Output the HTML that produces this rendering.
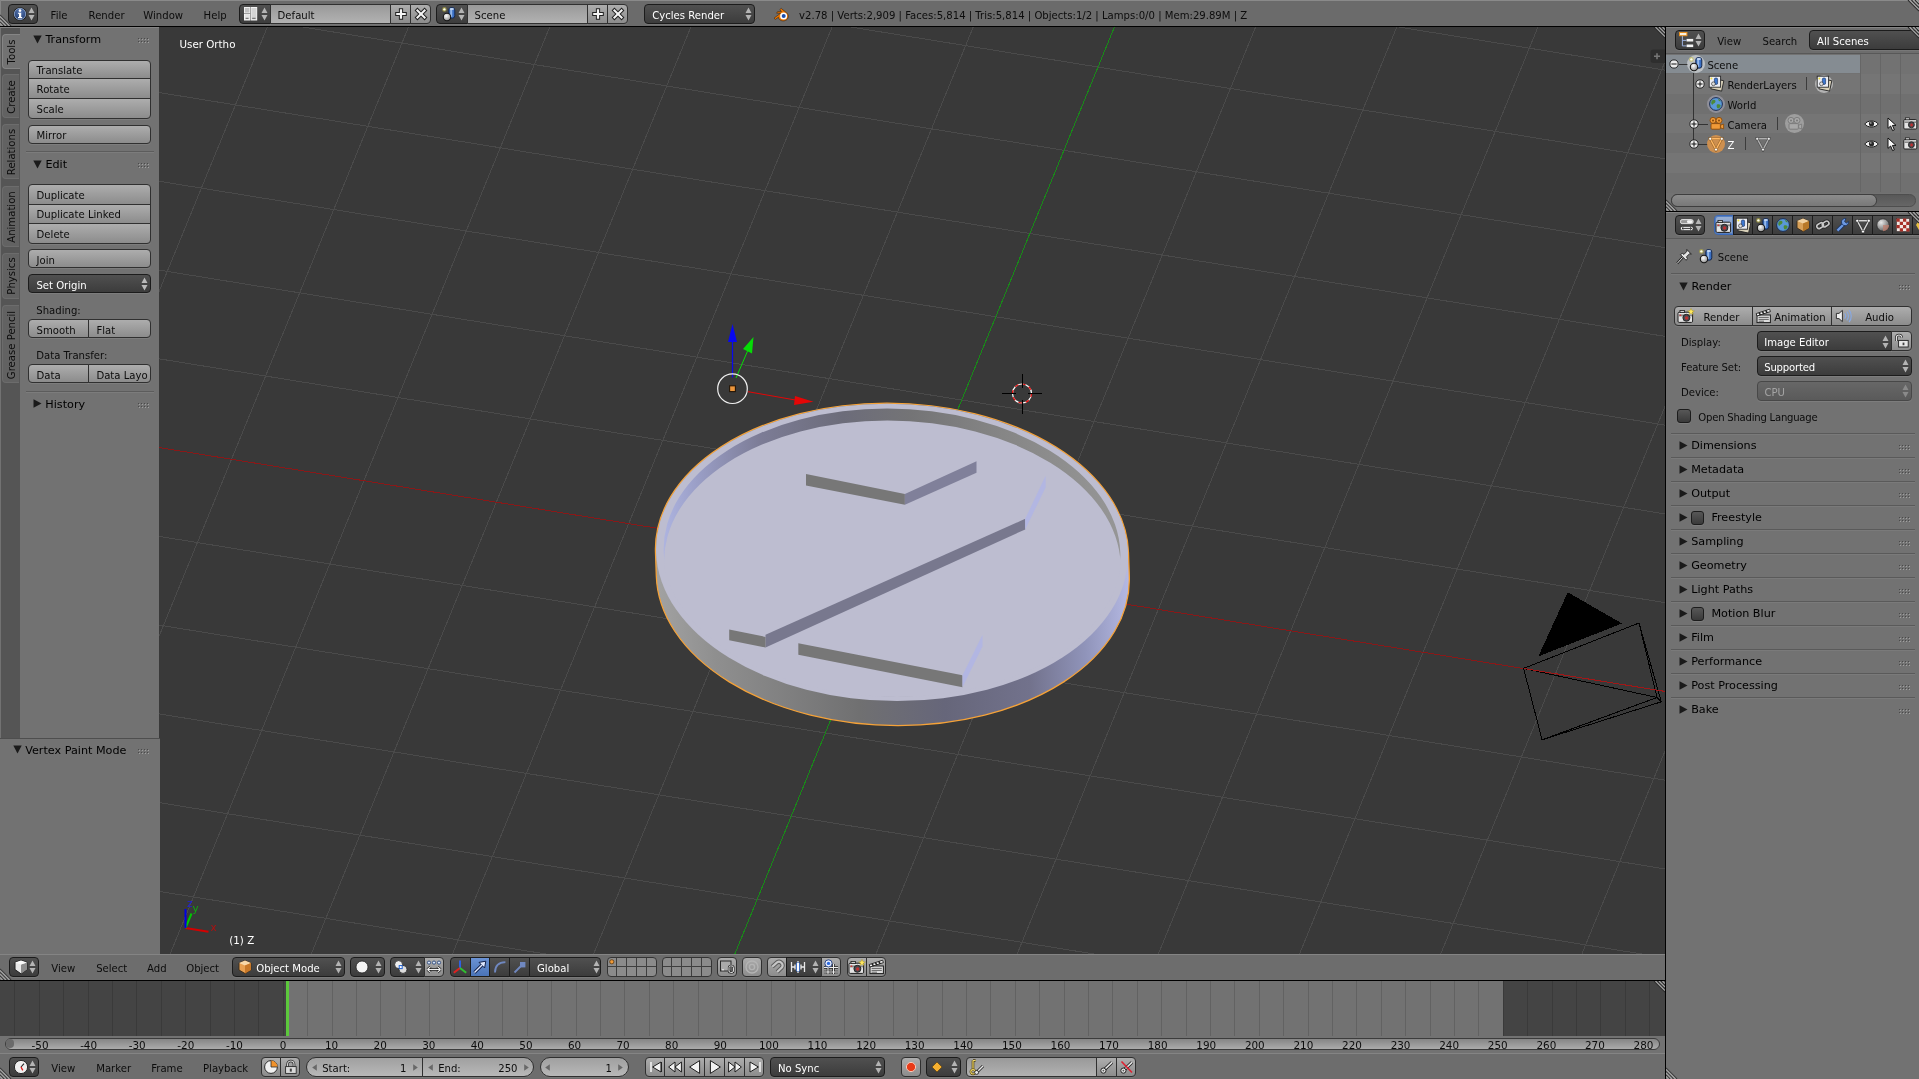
<!DOCTYPE html>
<html><head><meta charset="utf-8"><title>Blender</title><style>
html,body{margin:0;padding:0;overflow:hidden;background:#727272}
body{width:1919px;height:1079px;position:relative;font-family:"DejaVu Sans","Liberation Sans",sans-serif;font-size:10.1px;color:#000;line-height:1}
div,span,svg{position:absolute;box-sizing:border-box;white-space:nowrap}
.hdr{background:#6b6b6b}
.pan{background:#727272}
.t{font-size:10.1px;color:#0c0c0c;line-height:12px;height:12px}
.tw{color:#fff}
.pt{font-size:11.2px;color:#000;line-height:13px;height:13px}
.btn{border:1px solid #303030;border-radius:4px;background:linear-gradient(#adadad,#8c8c8c);box-shadow:0 1px 0 rgba(255,255,255,.08)}
.txt{border:1px solid #303030;border-radius:4px;background:linear-gradient(#999,#b2b2b2);box-shadow:0 1px 0 rgba(255,255,255,.08)}
.mnu{border:1px solid #1c1c1c;border-radius:4px;background:linear-gradient(#505050,#3c3c3c);box-shadow:0 1px 0 rgba(255,255,255,.08)}
.num{border:1px solid #303030;border-radius:10px;background:linear-gradient(#a0a0a0,#b8b8b8);box-shadow:0 1px 0 rgba(255,255,255,.08)}
.rl{border-radius:4px 0 0 4px}.rr{border-radius:0 4px 4px 0}.rn{border-radius:0}
.rt{border-radius:4px 4px 0 0}.rb{border-radius:0 0 4px 4px}
.nbl{border-left:none}.nbt{border-top:none}
.chk{border:1px solid #1c1c1c;border-radius:3px;background:linear-gradient(#575757,#3a3a3a);box-shadow:0 1px 0 rgba(255,255,255,.08)}
.sep{background:#5a5a5a;height:1px}
</style></head><body><div id="root" style="left:0;top:0;width:1919px;height:1079px;will-change:transform">
<div class="hdr" style="left:0px;top:0px;width:1919px;height:26px;"></div>
<div class="" style="left:0px;top:0px;width:1919px;height:1px;background:#8a8a8a"></div>
<div class="" style="left:0px;top:0px;width:1px;height:26px;background:#858585"></div>
<div class="" style="left:0px;top:26px;width:1919px;height:1px;background:#000"></div>
<div class="" style="left:0px;top:27px;width:1665px;height:1px;background:#858585"></div>
<div class="pan" style="left:0px;top:28px;width:160px;height:926px;"></div>
<div class="" style="left:159px;top:27px;width:1506px;height:927px;background:#393939"></div>
<svg style="left:159px;top:27px" width="1506" height="927" viewBox="159 27 1506 927"><defs><linearGradient id="gside" x1="655" x2="1130" y1="0" y2="0" gradientUnits="userSpaceOnUse"><stop offset="0" stop-color="#a2a2a2"/><stop offset="0.12" stop-color="#8f8f8f"/><stop offset="0.42" stop-color="#707071"/><stop offset="0.6" stop-color="#66667a"/><stop offset="0.78" stop-color="#72728c"/><stop offset="0.9" stop-color="#9094ba"/><stop offset="1" stop-color="#b6bae4"/></linearGradient><linearGradient id="gwall" x1="664" x2="1122" y1="0" y2="0" gradientUnits="userSpaceOnUse"><stop offset="0" stop-color="#aeb4e0"/><stop offset="0.08" stop-color="#9a9ec6"/><stop offset="0.22" stop-color="#7c7c96"/><stop offset="0.4" stop-color="#6c6c7a"/><stop offset="0.55" stop-color="#747476"/><stop offset="0.75" stop-color="#868686"/><stop offset="1" stop-color="#969696"/></linearGradient><clipPath id="cin"><ellipse cx="892.4" cy="552.4" rx="229.2" ry="144.7"/></clipPath></defs><g stroke="#4a4a4a" stroke-width="1" shape-rendering="crispEdges" fill="none"><line x1="8.7" y1="-375.6" x2="-604.9" y2="1122.7"/><line x1="141.1" y1="-354.2" x2="-472.5" y2="1144.1"/><line x1="273.5" y1="-332.7" x2="-340.1" y2="1165.6"/><line x1="405.9" y1="-311.3" x2="-207.7" y2="1187.0"/><line x1="538.3" y1="-289.9" x2="-75.3" y2="1208.5"/><line x1="670.7" y1="-268.4" x2="57.1" y2="1229.9"/><line x1="803.1" y1="-247.0" x2="189.5" y2="1251.3"/><line x1="935.5" y1="-225.5" x2="321.9" y2="1272.8"/><line x1="1067.9" y1="-204.1" x2="454.3" y2="1294.2"/><line x1="1332.7" y1="-161.2" x2="719.1" y2="1337.1"/><line x1="1465.1" y1="-139.8" x2="851.5" y2="1358.5"/><line x1="1597.5" y1="-118.3" x2="983.9" y2="1380.0"/><line x1="1729.9" y1="-96.9" x2="1116.3" y2="1401.4"/><line x1="1862.3" y1="-75.5" x2="1248.7" y2="1422.9"/><line x1="1994.7" y1="-54.0" x2="1381.1" y2="1444.3"/><line x1="2127.1" y1="-32.6" x2="1513.5" y2="1465.7"/><line x1="2259.5" y1="-11.1" x2="1645.9" y2="1487.2"/><line x1="2391.9" y1="10.3" x2="1778.3" y2="1508.6"/><line x1="8.7" y1="-375.6" x2="2391.9" y2="10.3"/><line x1="-25.4" y1="-292.4" x2="2357.8" y2="93.5"/><line x1="-59.5" y1="-209.1" x2="2323.7" y2="176.8"/><line x1="-93.6" y1="-125.9" x2="2289.6" y2="260.0"/><line x1="-127.7" y1="-42.7" x2="2255.6" y2="343.3"/><line x1="-161.7" y1="40.6" x2="2221.5" y2="426.5"/><line x1="-195.8" y1="123.8" x2="2187.4" y2="509.7"/><line x1="-229.9" y1="207.1" x2="2153.3" y2="593.0"/><line x1="-264.0" y1="290.3" x2="2119.2" y2="676.2"/><line x1="-332.2" y1="456.8" x2="2051.0" y2="842.7"/><line x1="-366.3" y1="540.0" x2="2016.9" y2="925.9"/><line x1="-400.4" y1="623.3" x2="1982.8" y2="1009.2"/><line x1="-434.5" y1="706.5" x2="1948.7" y2="1092.4"/><line x1="-468.6" y1="789.7" x2="1914.7" y2="1175.7"/><line x1="-502.6" y1="873.0" x2="1880.6" y2="1258.9"/><line x1="-536.7" y1="956.2" x2="1846.5" y2="1342.1"/><line x1="-570.8" y1="1039.5" x2="1812.4" y2="1425.4"/><line x1="-604.9" y1="1122.7" x2="1778.3" y2="1508.6"/><line stroke="#8a1818" x1="-298.1" y1="373.5" x2="2085.1" y2="759.5"/><line stroke="#188a18" x1="1200.3" y1="-182.7" x2="586.7" y2="1315.7"/></g><g stroke="#000" stroke-width="1" fill="none" shape-rendering="crispEdges"><polygon points="1568,593 1620.9,623.4 1539.3,655.5" fill="#000"/><polygon points="1523.6,668.4 1639,623 1661.3,701.8 1542.1,739.8"/><path d="M1523.6 668.4L1657 697.5M1639 623L1657 697.5M1661.3 701.8L1657 697.5M1542.1 739.8L1657 697.5"/></g><line stroke="#a01818" stroke-width="1" shape-rendering="crispEdges" x1="1523.6" y1="668.5" x2="1665" y2="691.4"/><g transform="matrix(1 0 0.0345 1 -19.468 0)"><path d="M655.9 552.4 A236.5 149.3 0 0 1 1128.9 552.4 L1128.9 576.3 A236.5 149.3 0 0 1 655.9 576.3 Z" fill="url(#gside)" stroke="#f5a238" stroke-width="1.3"/><ellipse cx="892.4" cy="552.4" rx="235.9" ry="148.7" fill="#bdbdd0"/><ellipse cx="892.4" cy="552.4" rx="228.3" ry="143.8" fill="url(#gwall)"/><g clip-path="url(#cin)"><ellipse cx="892.4" cy="564.4" rx="228.3" ry="143.8" fill="#bdbdd0"/></g></g><polygon points="806.0,474.0 904.9,494.0 904.9,504.7 806.0,485.5" fill="#777777"/><polygon points="904.9,494.0 976.5,461.2 976.5,472.7 904.9,504.7" fill="#80809a"/><polygon points="765.5,634.8 1025.2,518.8 1025.2,529.4 765.5,647.5" fill="#78788e"/><polygon points="729.2,629.6 765.5,636.9 765.5,647.5 729.2,640.3" fill="#777777"/><polygon points="1025.2,518.8 1045.6,475.7 1045.6,487.6 1025.2,529.4" fill="#b2b6e2"/><polygon points="798.3,643.3 962.5,675.3 962.5,687.2 798.3,654.8" fill="#777777"/><polygon points="962.5,675.3 982.5,634.8 982.5,646.3 962.5,687.2" fill="#b2b6e2"/><g><line x1="732.5" y1="377.5" x2="732.5" y2="340" stroke="#0808f0" stroke-width="1.2"/><polygon points="732.5,324 728,342 737,342" fill="#0808f0"/><line x1="736" y1="378" x2="748" y2="350" stroke="#06dc06" stroke-width="1"/><polygon points="753.5,337 743,349 752,353.5" fill="#06dc06"/><line x1="748" y1="391.7" x2="797" y2="400.3" stroke="#e40606" stroke-width="1"/><polygon points="813.5,401.8 795,396 794,405" fill="#e40606"/></g><circle cx="732.5" cy="388.7" r="14.8" fill="none" stroke="#f0f0f0" stroke-width="1.2"/><rect x="729.6" y="385.8" width="5.8" height="5.8" fill="#ec963c" stroke="#241608" stroke-width="1.1"/><circle cx="1022" cy="393.5" r="9.5" fill="none" stroke="#fff" stroke-width="1.2"/><circle cx="1022" cy="393.5" r="9.5" fill="none" stroke="#e40606" stroke-width="1.2" stroke-dasharray="3.7 3.7"/><path d="M1002 393.5H1016M1028 393.5H1042M1022 373.5V387.5M1022 399.5V413.5" stroke="#000" stroke-width="1" shape-rendering="crispEdges"/><g stroke-width="2" fill="none"><line x1="185.5" y1="928" x2="208.5" y2="931.7" stroke="#d40000"/><line x1="185.5" y1="928" x2="191.5" y2="913.5" stroke="#00c800"/><line x1="185.5" y1="928" x2="185.5" y2="909" stroke="#0000e6"/></g><text x="210.5" y="931" font-size="10.3" fill="#b01010">x</text><text x="192.5" y="912" font-size="10.3" fill="#10a810">y</text><text x="187" y="907" font-size="10.3" fill="#2020d8">z</text><text x="179.5" y="48.2" font-size="10.3" fill="#fff">User Ortho</text><text x="229.3" y="943.7" font-size="10.3" fill="#fff">(1) Z</text><rect x="1650.5" y="49.5" width="20" height="13.5" rx="3" fill="#2e2e2e"/><path d="M1654 56.2H1660M1657 53.2V59.2" stroke="#777" stroke-width="1.6"/></svg><div class="" style="left:1665px;top:27px;width:1px;height:1052px;background:#000"></div>
<div class="" style="left:1px;top:28px;width:18.5px;height:710px;background:#555"></div>
<div class="" style="left:2px;top:33.6px;width:17.5px;height:35.2px;background:#727272;border:1px solid #858585;border-right:none;border-radius:4px 0 0 4px"></div>
<span class="t" style="left:6.2px;top:51.7px;width:0;height:0;"><span class="t" style="left:0;top:0;transform-origin:0 0;transform:rotate(-90deg) translate(-50%,0);">Tools</span></span>
<div class="" style="left:2px;top:74.1px;width:17.2px;height:44.2px;background:#626262;border:1px solid #6c6c6c;border-right:none;border-radius:4px 0 0 4px"></div>
<span class="t" style="left:6.2px;top:96.7px;width:0;height:0;"><span class="t" style="left:0;top:0;transform-origin:0 0;transform:rotate(-90deg) translate(-50%,0);">Create</span></span>
<div class="" style="left:2px;top:123.6px;width:17.2px;height:55.8px;background:#626262;border:1px solid #6c6c6c;border-right:none;border-radius:4px 0 0 4px"></div>
<span class="t" style="left:6.2px;top:152px;width:0;height:0;"><span class="t" style="left:0;top:0;transform-origin:0 0;transform:rotate(-90deg) translate(-50%,0);">Relations</span></span>
<div class="" style="left:2px;top:185.7px;width:17.2px;height:61.1px;background:#626262;border:1px solid #6c6c6c;border-right:none;border-radius:4px 0 0 4px"></div>
<span class="t" style="left:6.2px;top:216.75px;width:0;height:0;"><span class="t" style="left:0;top:0;transform-origin:0 0;transform:rotate(-90deg) translate(-50%,0);">Animation</span></span>
<div class="" style="left:2px;top:252.6px;width:17.2px;height:46.1px;background:#626262;border:1px solid #6c6c6c;border-right:none;border-radius:4px 0 0 4px"></div>
<span class="t" style="left:6.2px;top:276.15px;width:0;height:0;"><span class="t" style="left:0;top:0;transform-origin:0 0;transform:rotate(-90deg) translate(-50%,0);">Physics</span></span>
<div class="" style="left:2px;top:305.2px;width:17.2px;height:78.1px;background:#626262;border:1px solid #6c6c6c;border-right:none;border-radius:4px 0 0 4px"></div>
<span class="t" style="left:6.2px;top:344.75px;width:0;height:0;"><span class="t" style="left:0;top:0;transform-origin:0 0;transform:rotate(-90deg) translate(-50%,0);">Grease Pencil</span></span>
<svg style="left:32.6px;top:34.6px" width="9" height="9" viewBox="0 0 9 9"><path d="M0.3 0.5H8.7L4.5 8.5Z" fill="#1a1a1a"/></svg>
<span class="pt" style="left:45.4px;top:33.3px;">Transform</span>
<svg style="left:137.5px;top:38px" width="12" height="6" viewBox="0 0 12 6"><rect x="0" y="0" width="1" height="1" fill="#4a4a4a"/><rect x="1" y="1" width="1" height="1" fill="#a0a0a0"/><rect x="0" y="3" width="1" height="1" fill="#4a4a4a"/><rect x="1" y="4" width="1" height="1" fill="#a0a0a0"/><rect x="3" y="0" width="1" height="1" fill="#4a4a4a"/><rect x="4" y="1" width="1" height="1" fill="#a0a0a0"/><rect x="3" y="3" width="1" height="1" fill="#4a4a4a"/><rect x="4" y="4" width="1" height="1" fill="#a0a0a0"/><rect x="6" y="0" width="1" height="1" fill="#4a4a4a"/><rect x="7" y="1" width="1" height="1" fill="#a0a0a0"/><rect x="6" y="3" width="1" height="1" fill="#4a4a4a"/><rect x="7" y="4" width="1" height="1" fill="#a0a0a0"/><rect x="9" y="0" width="1" height="1" fill="#4a4a4a"/><rect x="10" y="1" width="1" height="1" fill="#a0a0a0"/><rect x="9" y="3" width="1" height="1" fill="#4a4a4a"/><rect x="10" y="4" width="1" height="1" fill="#a0a0a0"/></svg>
<div class="btn rt" style="left:28px;top:60px;width:123px;height:19px;"></div>
<div class="btn rn" style="left:28px;top:78px;width:123px;height:21px;"></div>
<div class="btn rb" style="left:28px;top:98px;width:123px;height:21px;"></div>
<span class="t" style="left:36.6px;top:64.9px;">Translate</span>
<span class="t" style="left:36.6px;top:84.2px;">Rotate</span>
<span class="t" style="left:36.6px;top:104px;">Scale</span>
<div class="btn " style="left:28px;top:125px;width:123px;height:19px;"></div>
<span class="t" style="left:36.6px;top:129.8px;">Mirror</span>
<div class="" style="left:25.5px;top:151px;width:128.5px;height:1px;background:#5c5c5c"></div>
<div class="" style="left:25.5px;top:152px;width:128.5px;height:1px;background:#7c7c7c"></div>
<svg style="left:32.6px;top:159.8px" width="9" height="9" viewBox="0 0 9 9"><path d="M0.3 0.5H8.7L4.5 8.5Z" fill="#1a1a1a"/></svg>
<span class="pt" style="left:45.4px;top:158px;">Edit</span>
<svg style="left:137.5px;top:163px" width="12" height="6" viewBox="0 0 12 6"><rect x="0" y="0" width="1" height="1" fill="#4a4a4a"/><rect x="1" y="1" width="1" height="1" fill="#a0a0a0"/><rect x="0" y="3" width="1" height="1" fill="#4a4a4a"/><rect x="1" y="4" width="1" height="1" fill="#a0a0a0"/><rect x="3" y="0" width="1" height="1" fill="#4a4a4a"/><rect x="4" y="1" width="1" height="1" fill="#a0a0a0"/><rect x="3" y="3" width="1" height="1" fill="#4a4a4a"/><rect x="4" y="4" width="1" height="1" fill="#a0a0a0"/><rect x="6" y="0" width="1" height="1" fill="#4a4a4a"/><rect x="7" y="1" width="1" height="1" fill="#a0a0a0"/><rect x="6" y="3" width="1" height="1" fill="#4a4a4a"/><rect x="7" y="4" width="1" height="1" fill="#a0a0a0"/><rect x="9" y="0" width="1" height="1" fill="#4a4a4a"/><rect x="10" y="1" width="1" height="1" fill="#a0a0a0"/><rect x="9" y="3" width="1" height="1" fill="#4a4a4a"/><rect x="10" y="4" width="1" height="1" fill="#a0a0a0"/></svg>
<div class="btn rt" style="left:28px;top:184px;width:123px;height:21px;"></div>
<div class="btn rn" style="left:28px;top:204px;width:123px;height:20px;"></div>
<div class="btn rb" style="left:28px;top:223px;width:123px;height:21px;"></div>
<span class="t" style="left:36.6px;top:190px;">Duplicate</span>
<span class="t" style="left:36.6px;top:209px;">Duplicate Linked</span>
<span class="t" style="left:36.6px;top:228.8px;">Delete</span>
<div class="btn " style="left:28px;top:249px;width:123px;height:19px;"></div>
<span class="t" style="left:36.6px;top:254.8px;">Join</span>
<div class="mnu" style="left:28px;top:274px;width:123px;height:19px;"></div>
<span class="t tw" style="left:36.4px;top:279.8px;">Set Origin</span>
<svg style="left:141px;top:277.2px" width="7" height="14" viewBox="0 0 7 14"><path d="M3.5 0.5L6.5 6H0.5Z M3.5 13.5L6.5 8H0.5Z" fill="#bbb"/></svg><span class="t" style="left:36.3px;top:304.9px;">Shading:</span>
<div class="btn rl" style="left:28px;top:319px;width:61px;height:19px;"></div>
<div class="btn rr" style="left:88px;top:319px;width:63px;height:19px;"></div>
<span class="t" style="left:36.6px;top:324.8px;">Smooth</span>
<span class="t" style="left:96.4px;top:324.8px;">Flat</span>
<span class="t" style="left:36.3px;top:349.8px;">Data Transfer:</span>
<div class="btn rl" style="left:28px;top:364px;width:61px;height:19px;"></div>
<div class="btn rr" style="left:88px;top:364px;width:63px;height:19px;"></div>
<span class="t" style="left:36.6px;top:370.2px;">Data</span>
<div class="" style="left:89px;top:364px;width:61px;height:19px;overflow:hidden"><span class="t" style="left:7.4px;top:6.2px">Data Layo</span></div>
<div class="" style="left:25.5px;top:390.5px;width:128.5px;height:1px;background:#5c5c5c"></div>
<div class="" style="left:25.5px;top:391.5px;width:128.5px;height:1px;background:#7c7c7c"></div>
<svg style="left:33.2px;top:399.3px" width="9" height="9" viewBox="0 0 9 9"><path d="M0.5 0.3V8.7L8.5 4.5Z" fill="#1a1a1a"/></svg>
<span class="pt" style="left:45.3px;top:397.9px;">History</span>
<svg style="left:137.5px;top:403px" width="12" height="6" viewBox="0 0 12 6"><rect x="0" y="0" width="1" height="1" fill="#4a4a4a"/><rect x="1" y="1" width="1" height="1" fill="#a0a0a0"/><rect x="0" y="3" width="1" height="1" fill="#4a4a4a"/><rect x="1" y="4" width="1" height="1" fill="#a0a0a0"/><rect x="3" y="0" width="1" height="1" fill="#4a4a4a"/><rect x="4" y="1" width="1" height="1" fill="#a0a0a0"/><rect x="3" y="3" width="1" height="1" fill="#4a4a4a"/><rect x="4" y="4" width="1" height="1" fill="#a0a0a0"/><rect x="6" y="0" width="1" height="1" fill="#4a4a4a"/><rect x="7" y="1" width="1" height="1" fill="#a0a0a0"/><rect x="6" y="3" width="1" height="1" fill="#4a4a4a"/><rect x="7" y="4" width="1" height="1" fill="#a0a0a0"/><rect x="9" y="0" width="1" height="1" fill="#4a4a4a"/><rect x="10" y="1" width="1" height="1" fill="#a0a0a0"/><rect x="9" y="3" width="1" height="1" fill="#4a4a4a"/><rect x="10" y="4" width="1" height="1" fill="#a0a0a0"/></svg>
<div class="" style="left:0px;top:737.5px;width:160px;height:1px;background:#4e4e4e"></div>
<div class="pan" style="left:0px;top:738.5px;width:160px;height:215.5px;"></div>
<svg style="left:12.6px;top:745.4px" width="9" height="9" viewBox="0 0 9 9"><path d="M0.3 0.5H8.7L4.5 8.5Z" fill="#1a1a1a"/></svg>
<span class="pt" style="left:25.2px;top:744.2px;">Vertex Paint Mode</span>
<svg style="left:137.8px;top:749px" width="12" height="6" viewBox="0 0 12 6"><rect x="0" y="0" width="1" height="1" fill="#4a4a4a"/><rect x="1" y="1" width="1" height="1" fill="#a0a0a0"/><rect x="0" y="3" width="1" height="1" fill="#4a4a4a"/><rect x="1" y="4" width="1" height="1" fill="#a0a0a0"/><rect x="3" y="0" width="1" height="1" fill="#4a4a4a"/><rect x="4" y="1" width="1" height="1" fill="#a0a0a0"/><rect x="3" y="3" width="1" height="1" fill="#4a4a4a"/><rect x="4" y="4" width="1" height="1" fill="#a0a0a0"/><rect x="6" y="0" width="1" height="1" fill="#4a4a4a"/><rect x="7" y="1" width="1" height="1" fill="#a0a0a0"/><rect x="6" y="3" width="1" height="1" fill="#4a4a4a"/><rect x="7" y="4" width="1" height="1" fill="#a0a0a0"/><rect x="9" y="0" width="1" height="1" fill="#4a4a4a"/><rect x="10" y="1" width="1" height="1" fill="#a0a0a0"/><rect x="9" y="3" width="1" height="1" fill="#4a4a4a"/><rect x="10" y="4" width="1" height="1" fill="#a0a0a0"/></svg>
<svg style="left:0px;top:14px" width="12" height="12" viewBox="0 0 12 12"><path d="M0 1L11 12M0 4.5L7.5 12M0 8L4 12" stroke="#3c3c3c" stroke-width="1.2"/><path d="M0 2.5L9.5 12M0 6L6 12M0 9.5L2.5 12" stroke="#a4a4a4" stroke-width="1.2"/></svg>
<div class="mnu" style="left:8px;top:4px;width:30px;height:20px;"></div>
<svg style="left:12px;top:6px" width="16" height="16" viewBox="0 0 16 16"><defs><radialGradient id="gi" cx="0.5" cy="0.3" r="0.7"><stop offset="0" stop-color="#5a7ab4"/><stop offset="1" stop-color="#223c70"/></radialGradient></defs><circle cx="8" cy="8" r="6.7" fill="#1a1a1a"/><circle cx="8" cy="8" r="5.7" fill="url(#gi)" stroke="#9ab4dc" stroke-width=".8"/><circle cx="8" cy="4.6" r="1.3" fill="#fff"/><path d="M6.2 6.8H9.2V11H10.2V12.2H6V11H7V8H6.2Z" fill="#fff"/></svg><svg style="left:27.8px;top:7.2px" width="7" height="14" viewBox="0 0 7 14"><path d="M3.5 0.5L6.5 6H0.5Z M3.5 13.5L6.5 8H0.5Z" fill="#b4b4b4"/></svg><span class="t" style="left:50.6px;top:10.2px;">File</span>
<span class="t" style="left:88.6px;top:10.2px;">Render</span>
<span class="t" style="left:143.3px;top:10.2px;">Window</span>
<span class="t" style="left:203.6px;top:10.2px;">Help</span>
<div class="mnu rl" style="left:239px;top:4px;width:32px;height:20px;"></div>
<div class="txt rn" style="left:270px;top:4px;width:121px;height:20px;"></div>
<div class="btn rn" style="left:390px;top:4px;width:21px;height:20px;"></div>
<div class="btn rr" style="left:410px;top:4px;width:21px;height:20px;"></div>
<svg style="left:244.4px;top:6px" width="16" height="16" viewBox="0 0 16 16"><rect x=".5" y="1.5" width="5.2" height="5.4" fill="#c4c4c4" stroke="#f2f2f2" stroke-width="1"/><rect x=".5" y="8.3" width="5.2" height="5.7" fill="#e6e6e6" stroke="#f6f6f6" stroke-width="1"/><rect x="7.1" y="1.5" width="5.6" height="12.5" fill="#d4d4d4" stroke="#f4f4f4" stroke-width="1"/><path d="M1.6 12.3H4.6M8.2 12.3H11.6" stroke="#555" stroke-width=".9"/></svg><svg style="left:261px;top:7.2px" width="7" height="14" viewBox="0 0 7 14"><path d="M3.5 0.5L6.5 6H0.5Z M3.5 13.5L6.5 8H0.5Z" fill="#b4b4b4"/></svg><span class="t" style="left:277.6px;top:10.2px;">Default</span>
<svg style="left:394.3px;top:7px" width="14" height="14" viewBox="0 0 14 14"><path d="M7 1.2V12.8M1.2 7H12.8" stroke="#222" stroke-width="4.2"/><path d="M7 2.2V11.8M2.2 7H11.8" stroke="#f6f6f6" stroke-width="2.2"/></svg><svg style="left:413.6px;top:7px" width="14" height="14" viewBox="0 0 14 14"><path d="M2 2L12 12M12 2L2 12" stroke="#222" stroke-width="4"/><path d="M2.7 2.7L11.3 11.3M11.3 2.7L2.7 11.3" stroke="#f6f6f6" stroke-width="2"/></svg><div class="mnu rl" style="left:436px;top:4px;width:32px;height:20px;"></div>
<div class="txt rn" style="left:467px;top:4px;width:121px;height:20px;"></div>
<div class="btn rn" style="left:587px;top:4px;width:21px;height:20px;"></div>
<div class="btn rr" style="left:607px;top:4px;width:21px;height:20px;"></div>
<svg style="left:441.4px;top:6px" width="16" height="16" viewBox="0 0 16 16"><defs><radialGradient id="gs1" cx="0.4" cy="0.35" r="0.7"><stop offset="0" stop-color="#fff"/><stop offset="1" stop-color="#8c8c8c"/></radialGradient></defs><rect x="7.8" y="1.6" width="6" height="10.6" rx="2.4" fill="#3a70c4" stroke="#16284e" stroke-width="1"/><rect x="9.2" y="3" width="2" height="8" fill="#a4c4f0" opacity=".85"/><ellipse cx="10.8" cy="3" rx="2.2" ry="1" fill="#c4d8f4"/><circle cx="6" cy="11" r="3.7" fill="url(#gs1)" stroke="#161616" stroke-width="1.1"/><circle cx="3.4" cy="3.4" r="2.3" fill="#c8c038" opacity=".55"/><circle cx="3.4" cy="3.4" r="1.2" fill="#fffff0"/></svg><svg style="left:458px;top:7.2px" width="7" height="14" viewBox="0 0 7 14"><path d="M3.5 0.5L6.5 6H0.5Z M3.5 13.5L6.5 8H0.5Z" fill="#b4b4b4"/></svg><span class="t" style="left:474.6px;top:10.2px;">Scene</span>
<svg style="left:591.3px;top:7px" width="14" height="14" viewBox="0 0 14 14"><path d="M7 1.2V12.8M1.2 7H12.8" stroke="#222" stroke-width="4.2"/><path d="M7 2.2V11.8M2.2 7H11.8" stroke="#f6f6f6" stroke-width="2.2"/></svg><svg style="left:610.6px;top:7px" width="14" height="14" viewBox="0 0 14 14"><path d="M2 2L12 12M12 2L2 12" stroke="#222" stroke-width="4"/><path d="M2.7 2.7L11.3 11.3M11.3 2.7L2.7 11.3" stroke="#f6f6f6" stroke-width="2"/></svg><div class="mnu" style="left:644px;top:4px;width:111px;height:20px;"></div>
<span class="t tw" style="left:652.2px;top:10.2px;">Cycles Render</span>
<svg style="left:745.3px;top:7.2px" width="7" height="14" viewBox="0 0 7 14"><path d="M3.5 0.5L6.5 6H0.5Z M3.5 13.5L6.5 8H0.5Z" fill="#b4b4b4"/></svg><svg style="left:772.5px;top:6.5px" width="17" height="15" viewBox="0 0 17 15"><path d="M1 11.2L7.6 6.2H3.6L4.6 4.6H8.4L6.8 2.6L8.2 1.4L13.4 5.6C16.4 8 15.6 12.4 12.2 13.6C9.2 14.6 5.8 13.2 5.4 10.2L2.4 12.4Z" fill="#ea7600" stroke="#3a2410" stroke-width=".6"/><circle cx="10.6" cy="9" r="3.5" fill="#fff"/><circle cx="10.7" cy="9" r="2" fill="#1c4fae"/></svg><span class="t" style="left:799.1px;top:10.2px;">v2.78 | Verts:2,909 | Faces:5,814 | Tris:5,814 | Objects:1/2 | Lamps:0/0 | Mem:29.89M | Z</span>
<svg style="left:1907px;top:0px" width="12" height="12" viewBox="0 0 12 12"><path d="M1 0L12 11M4.5 0L12 7.5M8 0L12 4" stroke="#2c2c2c" stroke-width="1.2"/><path d="M2.5 0L12 9.5M6 0L12 6M9.5 0L12 2.5" stroke="#a4a4a4" stroke-width="1.2"/></svg>
<svg style="left:1653px;top:27px" width="12" height="12" viewBox="0 0 12 12"><path d="M1 0L12 11M4.5 0L12 7.5M8 0L12 4" stroke="#2c2c2c" stroke-width="1.2"/><path d="M2.5 0L12 9.5M6 0L12 6M9.5 0L12 2.5" stroke="#a4a4a4" stroke-width="1.2"/></svg>
<div class="" style="left:0px;top:954px;width:1665px;height:26px;background:#6d6d6d"></div>
<div class="" style="left:0px;top:954px;width:1665px;height:1px;background:#848484"></div>
<div class="" style="left:0px;top:980px;width:1665px;height:1px;background:#000"></div>
<svg style="left:0px;top:968px" width="12" height="12" viewBox="0 0 12 12"><path d="M0 1L11 12M0 4.5L7.5 12M0 8L4 12" stroke="#3c3c3c" stroke-width="1.2"/><path d="M0 2.5L9.5 12M0 6L6 12M0 9.5L2.5 12" stroke="#a4a4a4" stroke-width="1.2"/></svg>
<div class="mnu" style="left:9px;top:957px;width:30px;height:20px;"></div>
<svg style="left:13px;top:959px" width="16" height="16" viewBox="0 0 16 16"><path d="M8 1.2L14 3.4V10.6L8 14.8L2 10.6V3.4Z" fill="#e9e9e9" stroke="#222" stroke-width="1"/><path d="M8 5.6L14 3.4V10.6L8 14.8Z" fill="#8c8c8c"/><path d="M2 3.4L8 5.6L14 3.4L8 1.4Z" fill="#fafafa"/></svg><svg style="left:28.8px;top:960.2px" width="7" height="14" viewBox="0 0 7 14"><path d="M3.5 0.5L6.5 6H0.5Z M3.5 13.5L6.5 8H0.5Z" fill="#b4b4b4"/></svg><span class="t" style="left:51.3px;top:963.4px;">View</span>
<span class="t" style="left:96.2px;top:963.4px;">Select</span>
<span class="t" style="left:147px;top:963.4px;">Add</span>
<span class="t" style="left:186.2px;top:963.4px;">Object</span>
<div class="mnu" style="left:232px;top:957px;width:112.5px;height:20px;"></div>
<svg style="left:237px;top:959px" width="16" height="16" viewBox="0 0 16 16"><path d="M8 1.5L14 4V11L8 14.5L2 11V4Z" fill="#e9a050" stroke="#3a2a18" stroke-width=".9"/><path d="M2 4L8 6.6L14 4L8 1.5Z" fill="#f8d8a8"/><path d="M8 6.6V14.5L14 11V4Z" fill="#c87828"/></svg>
<span class="t tw" style="left:256.2px;top:963.4px;">Object Mode</span>
<svg style="left:335.3px;top:960.2px" width="7" height="14" viewBox="0 0 7 14"><path d="M3.5 0.5L6.5 6H0.5Z M3.5 13.5L6.5 8H0.5Z" fill="#b4b4b4"/></svg><div class="mnu" style="left:350px;top:957px;width:34.5px;height:20px;"></div>
<svg style="left:354.5px;top:960px" width="14" height="14" viewBox="0 0 14 14"><circle cx="7" cy="7" r="6" fill="#f4f4f4" stroke="#222" stroke-width=".8"/></svg>
<svg style="left:375.3px;top:960.2px" width="7" height="14" viewBox="0 0 7 14"><path d="M3.5 0.5L6.5 6H0.5Z M3.5 13.5L6.5 8H0.5Z" fill="#b4b4b4"/></svg><div class="mnu rl" style="left:390px;top:957px;width:35px;height:20px;"></div>
<div class="btn rr" style="left:424px;top:957px;width:20px;height:20px;"></div>
<svg style="left:393px;top:959px" width="16" height="16" viewBox="0 0 16 16"><circle cx="5.6" cy="5.6" r="4" fill="#eee" stroke="#222" stroke-width=".8"/><circle cx="10" cy="10.4" r="4" fill="#ddd" stroke="#222" stroke-width=".8"/><rect x="6.2" y="6.6" width="3" height="3" fill="#fff" stroke="#2060d0" stroke-width="1"/></svg>
<svg style="left:414.8px;top:960.2px" width="7" height="14" viewBox="0 0 7 14"><path d="M3.5 0.5L6.5 6H0.5Z M3.5 13.5L6.5 8H0.5Z" fill="#b4b4b4"/></svg><svg style="left:426px;top:959px" width="16" height="16" viewBox="0 0 16 16"><g fill="#d8e4f8" stroke="#1a3a70" stroke-width=".8"><circle cx="3" cy="3.6" r="1.6"/><circle cx="8" cy="3.6" r="1.6"/><circle cx="13" cy="3.6" r="1.6"/></g><path d="M1.5 10.5H14.5M1.5 10.5L4.6 7.6M1.5 10.5L4.6 13.4M14.5 10.5L11.4 7.6M14.5 10.5L11.4 13.4" stroke="#222" stroke-width="2.6" fill="none"/><path d="M1.5 10.5H14.5M1.5 10.5L4.6 7.6M1.5 10.5L4.6 13.4M14.5 10.5L11.4 7.6M14.5 10.5L11.4 13.4" stroke="#f0f0f0" stroke-width="1.1" fill="none"/></svg>
<div class="mnu rl" style="left:450px;top:957px;width:21px;height:20px;"></div>
<div class="mnu rn" style="left:470px;top:957px;width:20px;height:20px;background:linear-gradient(#6a92d4,#4a74b8)"></div>
<div class="mnu rn" style="left:489px;top:957px;width:21px;height:20px;"></div>
<div class="mnu rn" style="left:509px;top:957px;width:21px;height:20px;"></div>
<div class="mnu rr" style="left:529px;top:957px;width:72px;height:20px;"></div>
<svg style="left:452px;top:959px" width="16" height="16" viewBox="0 0 16 16"><path d="M8 9V1.5" stroke="#3060e0" stroke-width="2"/><path d="M8 9L1.8 13.8" stroke="#e02020" stroke-width="2"/><path d="M8 9L14.2 13.8" stroke="#30c030" stroke-width="2"/></svg>
<svg style="left:471.5px;top:959px" width="16" height="16" viewBox="0 0 16 16"><path d="M2.5 13.5L10 6" stroke="#10204a" stroke-width="3.2"/><path d="M13.8 2.2L12.6 9L7 3.4Z" fill="#dfe8ff" stroke="#10204a" stroke-width="1"/><path d="M2.5 13.5L10 6" stroke="#dfe8ff" stroke-width="1.4"/></svg>
<svg style="left:491.5px;top:959px" width="16" height="16" viewBox="0 0 16 16"><path d="M3 13.5C3 7 7 3.4 13.4 3.2" stroke="#7088c0" stroke-width="1.8" fill="none"/></svg>
<svg style="left:511.5px;top:959px" width="16" height="16" viewBox="0 0 16 16"><path d="M2.5 13.5L9 7" stroke="#7088c0" stroke-width="1.8"/><rect x="8" y="3" width="5.4" height="5.4" fill="#7088c0"/></svg>
<span class="t tw" style="left:537px;top:963.4px;">Global</span>
<svg style="left:592.6px;top:960.2px" width="7" height="14" viewBox="0 0 7 14"><path d="M3.5 0.5L6.5 6H0.5Z M3.5 13.5L6.5 8H0.5Z" fill="#b4b4b4"/></svg><svg style="left:607px;top:957px" width="50" height="20" viewBox="0 0 50 20"><rect x=".5" y=".5" width="49" height="19" rx="3.5" fill="#8b8b8b" stroke="#343434"/><g fill="#3e3e3e" shape-rendering="crispEdges"><rect x="9" y="1" width="1" height="18"/><rect x="19" y="1" width="1" height="18"/><rect x="29" y="1" width="1" height="18"/><rect x="39" y="1" width="1" height="18"/><rect x="1" y="9" width="48" height="1"/></g><circle cx="4.8" cy="4.8" r="2.1" fill="#f09a38" stroke="#5a3810" stroke-width=".8"/></svg>
<svg style="left:662px;top:957px" width="50" height="20" viewBox="0 0 50 20"><rect x=".5" y=".5" width="49" height="19" rx="3.5" fill="#8b8b8b" stroke="#343434"/><g fill="#3e3e3e" shape-rendering="crispEdges"><rect x="9" y="1" width="1" height="18"/><rect x="19" y="1" width="1" height="18"/><rect x="29" y="1" width="1" height="18"/><rect x="39" y="1" width="1" height="18"/><rect x="1" y="9" width="48" height="1"/></g></svg>
<div class="btn" style="left:717px;top:957px;width:20px;height:20px;"></div>
<svg style="left:719px;top:959px" width="16" height="16" viewBox="0 0 16 16"><rect x="1.5" y="2" width="10.5" height="10" fill="#aaa" stroke="#2a2a2a"/><path d="M3 10.8H5" stroke="#eee" stroke-width="1"/><rect x="10" y="7" width="4.4" height="6.4" rx="1.4" fill="none" stroke="#1a1a1a" stroke-width="2.2"/><rect x="10" y="7" width="4.4" height="6.4" rx="1.4" fill="none" stroke="#eee" stroke-width="1"/></svg>
<div class="btn" style="left:742px;top:957px;width:20px;height:20px;"></div>
<svg style="left:744px;top:959px" width="16" height="16" viewBox="0 0 16 16"><circle cx="8" cy="8" r="6" fill="none" stroke="#b4b4b4" stroke-width="1.4"/><circle cx="8" cy="8" r="2.6" fill="none" stroke="#b4b4b4" stroke-width="1.4"/></svg>
<div class="btn rl" style="left:767px;top:957px;width:20px;height:20px;"></div>
<div class="mnu rn" style="left:786px;top:957px;width:36px;height:20px;"></div>
<div class="btn rr" style="left:821px;top:957px;width:20px;height:20px;"></div>
<svg style="left:769px;top:959px" width="16" height="16" viewBox="0 0 16 16"><path d="M3.2 7.8L8 3.4A3.6 3.6 0 0 1 12.8 8.6L8.2 13" stroke="#5c5c5c" stroke-width="4.2" fill="none"/><path d="M3.2 7.8L8 3.4A3.6 3.6 0 0 1 12.8 8.6L8.2 13" stroke="#c6c6c6" stroke-width="2.2" fill="none"/></svg>
<svg style="left:790px;top:960px" width="16" height="14" viewBox="0 0 16 14"><path d="M1.5 2V12M5 4.5V9.5M8 1V13M11 4.5V9.5M14.5 2V12M1.5 7H5M11 7H14.5" stroke="#e8e8e8" stroke-width="1.3"/><rect x="6.2" y="2.4" width="3.6" height="9.2" rx="1.4" fill="#3c78e0"/><rect x="7" y="3" width="2" height="8" fill="#fff"/></svg>
<svg style="left:812px;top:960.2px" width="7" height="14" viewBox="0 0 7 14"><path d="M3.5 0.5L6.5 6H0.5Z M3.5 13.5L6.5 8H0.5Z" fill="#b4b4b4"/></svg><svg style="left:823px;top:959px" width="16" height="16" viewBox="0 0 16 16"><path d="M5 5V15M10.5 5V15M1 8.5H15M1 13H15" stroke="#222" stroke-width="2.6"/><path d="M5 5V15M10.5 5V15M1 8.5H15M1 13H15" stroke="#eee" stroke-width="1.1"/><circle cx="5.5" cy="4.4" r="3.6" fill="#e8eefc" stroke="#1c3a80" stroke-width=".9"/><circle cx="5.5" cy="4.4" r="1.7" fill="#2c6ae0"/></svg>
<div class="btn rl" style="left:847px;top:957px;width:20px;height:20px;"></div>
<div class="btn rr" style="left:866px;top:957px;width:20px;height:20px;"></div>
<svg style="left:848.3px;top:959px" width="18" height="16" viewBox="0 0 18 16"><rect x="1" y="4.2" width="14.6" height="10.2" rx="1.2" fill="#e4e4e4" stroke="#1e1e1e" stroke-width="1"/><rect x="3" y="2.4" width="4.4" height="2.2" fill="#ccc" stroke="#1e1e1e" stroke-width=".8"/><rect x="1.6" y="6.4" width="13.4" height="2" fill="#888"/><circle cx="9.4" cy="9.8" r="3.5" fill="#4a4a50" stroke="#1e1e1e" stroke-width=".9"/><circle cx="9.6" cy="10" r="1.7" fill="#c03030"/><rect x="2.6" y="6.6" width="1.6" height="1.2" fill="#e02020"/><path d="M14 0.4L15 2.6L17.4 3L15.4 4.2L16 6.6L14 5.2L12 6.6L12.6 4.2L10.6 3L13 2.6Z" fill="#ffe860" stroke="#a08a10" stroke-width=".4"/></svg><svg style="left:867.6px;top:959px" width="18" height="16" viewBox="0 0 18 16"><rect x="2" y="7" width="13.4" height="7.6" fill="#dcdcdc" stroke="#1e1e1e" stroke-width="1"/><path d="M3.6 9.4H13.8M3.6 11.4H13.8M3.6 13.2H9" stroke="#555" stroke-width=".9"/><path d="M1.2 5.6L14.6 1.2L15.4 3.6L2 8Z" fill="#f4f4f4" stroke="#1e1e1e" stroke-width=".9"/><path d="M4 4.7L5.4 7M7.4 3.6L8.8 5.9M10.8 2.5L12.2 4.8" stroke="#1e1e1e" stroke-width="1.5"/></svg><svg style="left:0;top:981px" width="1665" height="55" viewBox="0 981 1665 55" shape-rendering="crispEdges"><rect x="0" y="981" width="1665" height="55" fill="#444"/><rect x="286.3" y="981" width="1216.6" height="55" fill="#727272"/><path d="M307.5 981V1036M332.5 981V1036M356.5 981V1036M380.5 981V1036M405.5 981V1036M429.5 981V1036M454.5 981V1036M478.5 981V1036M502.5 981V1036M527.5 981V1036M551.5 981V1036M576.5 981V1036M600.5 981V1036M624.5 981V1036M649.5 981V1036M673.5 981V1036M698.5 981V1036M722.5 981V1036M746.5 981V1036M771.5 981V1036M795.5 981V1036M820.5 981V1036M844.5 981V1036M868.5 981V1036M893.5 981V1036M917.5 981V1036M942.5 981V1036M966.5 981V1036M990.5 981V1036M1015.5 981V1036M1039.5 981V1036M1064.5 981V1036M1088.5 981V1036M1112.5 981V1036M1137.5 981V1036M1161.5 981V1036M1186.5 981V1036M1210.5 981V1036M1234.5 981V1036M1259.5 981V1036M1283.5 981V1036M1308.5 981V1036M1332.5 981V1036M1356.5 981V1036M1381.5 981V1036M1405.5 981V1036M1430.5 981V1036M1454.5 981V1036M1478.5 981V1036" stroke="#626262" stroke-width="1"/><path d="M14.5 981V1036M39.5 981V1036M63.5 981V1036M88.5 981V1036M112.5 981V1036M136.5 981V1036M161.5 981V1036M185.5 981V1036M210.5 981V1036M234.5 981V1036M258.5 981V1036M283.5 981V1036M1503.5 981V1036M1527.5 981V1036M1552.5 981V1036M1576.5 981V1036M1600.5 981V1036M1625.5 981V1036M1649.5 981V1036" stroke="#3a3a3a" stroke-width="1"/><rect x="285.6" y="981" width="3" height="55" fill="#5cc83c"/></svg><svg style="left:1653px;top:981px" width="12" height="12" viewBox="0 0 12 12"><path d="M1 0L12 11M4.5 0L12 7.5M8 0L12 4" stroke="#2c2c2c" stroke-width="1.2"/><path d="M2.5 0L12 9.5M6 0L12 6M9.5 0L12 2.5" stroke="#a4a4a4" stroke-width="1.2"/></svg>
<div class="pan" style="left:0px;top:1036px;width:1665px;height:17px;"></div>
<div class="" style="left:4.5px;top:1037.5px;width:1655px;height:12.5px;border:1px solid #3c3c3c;border-radius:6.5px;background:linear-gradient(#858585,#ababab)"></div>
<div class="" style="left:5.5px;top:1038.8px;width:8.6px;height:9.6px;border-radius:5px;background:#6a6a6a"></div>
<span class="t" style="left:20.05px;top:1038.7px;width:40px;text-align:center;font-size:10.4px">-50</span>
<span class="t" style="left:68.64px;top:1038.7px;width:40px;text-align:center;font-size:10.4px">-40</span>
<span class="t" style="left:117.23px;top:1038.7px;width:40px;text-align:center;font-size:10.4px">-30</span>
<span class="t" style="left:165.82px;top:1038.7px;width:40px;text-align:center;font-size:10.4px">-20</span>
<span class="t" style="left:214.41px;top:1038.7px;width:40px;text-align:center;font-size:10.4px">-10</span>
<span class="t" style="left:263px;top:1038.7px;width:40px;text-align:center;font-size:10.4px">0</span>
<span class="t" style="left:311.59px;top:1038.7px;width:40px;text-align:center;font-size:10.4px">10</span>
<span class="t" style="left:360.18px;top:1038.7px;width:40px;text-align:center;font-size:10.4px">20</span>
<span class="t" style="left:408.77px;top:1038.7px;width:40px;text-align:center;font-size:10.4px">30</span>
<span class="t" style="left:457.36px;top:1038.7px;width:40px;text-align:center;font-size:10.4px">40</span>
<span class="t" style="left:505.95px;top:1038.7px;width:40px;text-align:center;font-size:10.4px">50</span>
<span class="t" style="left:554.54px;top:1038.7px;width:40px;text-align:center;font-size:10.4px">60</span>
<span class="t" style="left:603.13px;top:1038.7px;width:40px;text-align:center;font-size:10.4px">70</span>
<span class="t" style="left:651.72px;top:1038.7px;width:40px;text-align:center;font-size:10.4px">80</span>
<span class="t" style="left:700.31px;top:1038.7px;width:40px;text-align:center;font-size:10.4px">90</span>
<span class="t" style="left:748.9px;top:1038.7px;width:40px;text-align:center;font-size:10.4px">100</span>
<span class="t" style="left:797.49px;top:1038.7px;width:40px;text-align:center;font-size:10.4px">110</span>
<span class="t" style="left:846.08px;top:1038.7px;width:40px;text-align:center;font-size:10.4px">120</span>
<span class="t" style="left:894.67px;top:1038.7px;width:40px;text-align:center;font-size:10.4px">130</span>
<span class="t" style="left:943.26px;top:1038.7px;width:40px;text-align:center;font-size:10.4px">140</span>
<span class="t" style="left:991.85px;top:1038.7px;width:40px;text-align:center;font-size:10.4px">150</span>
<span class="t" style="left:1040.44px;top:1038.7px;width:40px;text-align:center;font-size:10.4px">160</span>
<span class="t" style="left:1089.03px;top:1038.7px;width:40px;text-align:center;font-size:10.4px">170</span>
<span class="t" style="left:1137.62px;top:1038.7px;width:40px;text-align:center;font-size:10.4px">180</span>
<span class="t" style="left:1186.21px;top:1038.7px;width:40px;text-align:center;font-size:10.4px">190</span>
<span class="t" style="left:1234.8px;top:1038.7px;width:40px;text-align:center;font-size:10.4px">200</span>
<span class="t" style="left:1283.39px;top:1038.7px;width:40px;text-align:center;font-size:10.4px">210</span>
<span class="t" style="left:1331.98px;top:1038.7px;width:40px;text-align:center;font-size:10.4px">220</span>
<span class="t" style="left:1380.57px;top:1038.7px;width:40px;text-align:center;font-size:10.4px">230</span>
<span class="t" style="left:1429.16px;top:1038.7px;width:40px;text-align:center;font-size:10.4px">240</span>
<span class="t" style="left:1477.75px;top:1038.7px;width:40px;text-align:center;font-size:10.4px">250</span>
<span class="t" style="left:1526.34px;top:1038.7px;width:40px;text-align:center;font-size:10.4px">260</span>
<span class="t" style="left:1574.93px;top:1038.7px;width:40px;text-align:center;font-size:10.4px">270</span>
<span class="t" style="left:1623.52px;top:1038.7px;width:40px;text-align:center;font-size:10.4px">280</span>
<div class="" style="left:0px;top:1054px;width:1665px;height:25px;background:#6d6d6d"></div>
<div class="" style="left:0px;top:1053px;width:1665px;height:1px;background:#848484"></div>
<svg style="left:0px;top:1067px" width="12" height="12" viewBox="0 0 12 12"><path d="M0 1L11 12M0 4.5L7.5 12M0 8L4 12" stroke="#3c3c3c" stroke-width="1.2"/><path d="M0 2.5L9.5 12M0 6L6 12M0 9.5L2.5 12" stroke="#a4a4a4" stroke-width="1.2"/></svg>
<div class="mnu" style="left:9px;top:1057px;width:30px;height:20px;"></div>
<svg style="left:13px;top:1059px" width="16" height="16" viewBox="0 0 16 16"><circle cx="8" cy="8" r="6.6" fill="#f0f0f0" stroke="#2a2a2a" stroke-width="1"/><path d="M8 8L11 4.6" stroke="#222" stroke-width="1.1"/><path d="M8 8L9.8 11.4" stroke="#e01818" stroke-width="1.3"/></svg><svg style="left:28.8px;top:1060.2px" width="7" height="14" viewBox="0 0 7 14"><path d="M3.5 0.5L6.5 6H0.5Z M3.5 13.5L6.5 8H0.5Z" fill="#b4b4b4"/></svg><span class="t" style="left:51.3px;top:1063.1px;">View</span>
<span class="t" style="left:96.2px;top:1063.1px;">Marker</span>
<span class="t" style="left:151.2px;top:1063.1px;">Frame</span>
<span class="t" style="left:203px;top:1063.1px;">Playback</span>
<div class="btn rl" style="left:261px;top:1057px;width:20px;height:20px;"></div>
<div class="btn rr" style="left:280px;top:1057px;width:20px;height:20px;"></div>
<svg style="left:263px;top:1059px" width="16" height="16" viewBox="0 0 16 16"><circle cx="8" cy="8" r="6.4" fill="#f0f0f0" stroke="#2a2a2a" stroke-width="1"/><path d="M8 8V1.6A6.4 6.4 0 0 1 14.4 8Z" fill="#f0922c"/><path d="M8 8V2M8 8H14" stroke="#2a2a2a" stroke-width=".8"/></svg>
<svg style="left:283px;top:1059px" width="16" height="16" viewBox="0 0 16 16"><path d="M4.6 8V5.2A3.2 3.2 0 0 1 11 5.2V8" fill="none" stroke="#2a2a2a" stroke-width="2.6"/><path d="M4.6 8V5.2A3.2 3.2 0 0 1 11 5.2V8" fill="none" stroke="#d8d8d8" stroke-width="1.1"/><rect x="2.6" y="7.6" width="10.6" height="6.8" fill="#d8d8d8" stroke="#2a2a2a" stroke-width=".9"/><rect x="6.8" y="9.6" width="2" height="3" fill="#444"/></svg>
<div class="num" style="left:306px;top:1057px;width:117px;height:20px;border-radius:10px 0 0 10px"></div>
<div class="num" style="left:422px;top:1057px;width:112px;height:20px;border-radius:0 10px 10px 0"></div>
<svg style="left:311.6px;top:1063.5px" width="5" height="7" viewBox="0 0 5 7"><path d="M4.8 0.2V6.8L0.2 3.5Z" fill="#686868"/></svg><svg style="left:412.6px;top:1063.5px" width="5" height="7" viewBox="0 0 5 7"><path d="M0.2 0.2V6.8L4.8 3.5Z" fill="#686868"/></svg>
<span class="t" style="left:322.2px;top:1063.1px;">Start:</span>
<span class="t" style="left:346.5px;top:1063.1px;width:60px;text-align:right">1</span>
<svg style="left:427.6px;top:1063.5px" width="5" height="7" viewBox="0 0 5 7"><path d="M4.8 0.2V6.8L0.2 3.5Z" fill="#686868"/></svg><svg style="left:523.6px;top:1063.5px" width="5" height="7" viewBox="0 0 5 7"><path d="M0.2 0.2V6.8L4.8 3.5Z" fill="#686868"/></svg>
<span class="t" style="left:438.2px;top:1063.1px;">End:</span>
<span class="t" style="left:457.5px;top:1063.1px;width:60px;text-align:right">250</span>
<div class="num" style="left:539.5px;top:1057px;width:89px;height:20px;"></div>
<svg style="left:545.1px;top:1063.5px" width="5" height="7" viewBox="0 0 5 7"><path d="M4.8 0.2V6.8L0.2 3.5Z" fill="#686868"/></svg><svg style="left:618.1px;top:1063.5px" width="5" height="7" viewBox="0 0 5 7"><path d="M0.2 0.2V6.8L4.8 3.5Z" fill="#686868"/></svg>
<span class="t" style="left:552px;top:1063.1px;width:60px;text-align:right">1</span>
<div class="btn rl" style="left:645px;top:1057px;width:20px;height:20px;"></div>
<div class="btn rn" style="left:664px;top:1057px;width:21px;height:20px;"></div>
<div class="btn rn" style="left:684px;top:1057px;width:21px;height:20px;"></div>
<div class="btn rn" style="left:704px;top:1057px;width:21px;height:20px;"></div>
<div class="btn rn" style="left:724px;top:1057px;width:21px;height:20px;"></div>
<div class="btn rr" style="left:744px;top:1057px;width:20px;height:20px;"></div>
<svg style="left:647.5px;top:1059px" width="16" height="16" viewBox="0 0 16 16"><path d="M3 3V13" stroke="#f2f2f2" stroke-width="1.6"/><path d="M13 3V13L4.6 8Z M13.4 3V13" fill="#f2f2f2" stroke="#1c1c1c" stroke-width="1"/></svg>
<svg style="left:667px;top:1059px" width="16" height="16" viewBox="0 0 16 16"><path d="M8 3V13L1.6 8Z M14.4 3V13L8 8Z" fill="#f2f2f2" stroke="#1c1c1c" stroke-width="1"/></svg>
<svg style="left:686.7px;top:1059px" width="16" height="16" viewBox="0 0 16 16"><path d="M12.6 1.6V14.4L2.6 8Z" fill="#f2f2f2" stroke="#1c1c1c" stroke-width="1"/></svg>
<svg style="left:706.7px;top:1059px" width="16" height="16" viewBox="0 0 16 16"><path d="M3.4 1.6V14.4L13.4 8Z" fill="#f2f2f2" stroke="#1c1c1c" stroke-width="1"/></svg>
<svg style="left:726.7px;top:1059px" width="16" height="16" viewBox="0 0 16 16"><path d="M1.6 3V13L8 8Z M8 3V13L14.4 8Z" fill="#f2f2f2" stroke="#1c1c1c" stroke-width="1"/></svg>
<svg style="left:746.7px;top:1059px" width="16" height="16" viewBox="0 0 16 16"><path d="M13 3V13" stroke="#f2f2f2" stroke-width="1.6"/><path d="M3 3V13L11.4 8Z" fill="#f2f2f2" stroke="#1c1c1c" stroke-width="1"/></svg>
<div class="mnu" style="left:770px;top:1057px;width:114.5px;height:20px;"></div>
<span class="t tw" style="left:778px;top:1063.1px;">No Sync</span>
<svg style="left:875px;top:1060.2px" width="7" height="14" viewBox="0 0 7 14"><path d="M3.5 0.5L6.5 6H0.5Z M3.5 13.5L6.5 8H0.5Z" fill="#b4b4b4"/></svg><div class="btn" style="left:901px;top:1057px;width:19.7px;height:20px;"></div>
<svg style="left:903px;top:1059px" width="16" height="16" viewBox="0 0 16 16"><circle cx="8" cy="8" r="4.6" fill="#e83a18" stroke="#f8c8b8" stroke-width="1"/></svg>
<div class="mnu" style="left:926px;top:1057px;width:34.5px;height:20px;"></div>
<svg style="left:930px;top:1060px" width="14" height="14" viewBox="0 0 14 14"><path d="M7 2L12 7L7 12L2 7Z" fill="#f6b030" stroke="#503808" stroke-width=".6"/></svg>
<svg style="left:951px;top:1060.2px" width="7" height="14" viewBox="0 0 7 14"><path d="M3.5 0.5L6.5 6H0.5Z M3.5 13.5L6.5 8H0.5Z" fill="#b4b4b4"/></svg><div class="txt rl" style="left:966px;top:1057px;width:131px;height:20px;"></div>
<div class="btn rn" style="left:1096px;top:1057px;width:21px;height:20px;"></div>
<div class="btn rr" style="left:1116px;top:1057px;width:20px;height:20px;"></div>
<svg style="left:968.5px;top:1058.5px" width="18" height="17" viewBox="0 0 18 17"><path d="M4 1.5H6.6M4 1.5V11" stroke="#4a3a08" stroke-width="2.6"/><path d="M4 1.5H6.6M4 1.5V11" stroke="#f0d868" stroke-width="1.2"/><circle cx="4" cy="12.8" r="2.2" fill="none" stroke="#4a3a08" stroke-width="2.4"/><circle cx="4" cy="12.8" r="2.2" fill="none" stroke="#f0d868" stroke-width="1.1"/><path d="M8 13L14 7" stroke="#222" stroke-width="3"/><path d="M8 13L14 7" stroke="#e8e8e8" stroke-width="1.4"/><circle cx="7.6" cy="13.4" r="2" fill="#e8e8e8" stroke="#222" stroke-width=".9"/></svg>
<svg style="left:1098.5px;top:1059px" width="16" height="16" viewBox="0 0 16 16"><path d="M5 11L13 3.4" stroke="#222" stroke-width="3.2"/><path d="M5 11L13 3.4" stroke="#e8e8e8" stroke-width="1.5"/><circle cx="4.4" cy="11.6" r="2.6" fill="#e8e8e8" stroke="#222" stroke-width="1"/><circle cx="4.4" cy="11.6" r=".9" fill="#555"/></svg><svg style="left:1118.5px;top:1059px" width="16" height="16" viewBox="0 0 16 16"><path d="M5 11L13 3.4" stroke="#222" stroke-width="3.2"/><path d="M5 11L13 3.4" stroke="#e8e8e8" stroke-width="1.5"/><circle cx="4.4" cy="11.6" r="2.6" fill="#e8e8e8" stroke="#222" stroke-width="1"/><circle cx="4.4" cy="11.6" r=".9" fill="#555"/><path d="M2.5 2.5L13 13.5" stroke="#e02030" stroke-width="1.6"/></svg><div class="pan" style="left:1666px;top:27px;width:253px;height:1052px;"></div>
<div class="" style="left:1666px;top:27px;width:253px;height:26px;background:#6d6d6d"></div>
<div class="" style="left:1666px;top:27px;width:253px;height:1px;background:#858585"></div>
<div class="" style="left:1666px;top:52.5px;width:253px;height:1px;background:#585858"></div>
<div class="mnu" style="left:1675px;top:30px;width:30px;height:20px;"></div>
<svg style="left:1679px;top:32px" width="16" height="16" viewBox="0 0 16 16"><path d="M3.4 3.8V13.9H7.4M3.4 8.4H7.4" stroke="#9cb0dc" stroke-width="1" fill="none"/><rect x=".5" y=".5" width="7.4" height="3.2" fill="#f8f0e0" stroke="#e89020" stroke-width="1"/><rect x="7.6" y="6.9" width="6.6" height="2.6" fill="#f6f6f6"/><rect x="7.6" y="12.5" width="6.6" height="2.6" fill="#f6f6f6"/></svg><svg style="left:1694.8px;top:33.2px" width="7" height="14" viewBox="0 0 7 14"><path d="M3.5 0.5L6.5 6H0.5Z M3.5 13.5L6.5 8H0.5Z" fill="#b4b4b4"/></svg><span class="t" style="left:1717.2px;top:35.9px;">View</span>
<span class="t" style="left:1762.5px;top:35.9px;">Search</span>
<div class="mnu" style="left:1809px;top:30px;width:120px;height:20px;"></div>
<span class="t tw" style="left:1817px;top:35.9px;">All Scenes</span>
<svg style="left:1907px;top:27px" width="12" height="12" viewBox="0 0 12 12"><path d="M1 0L12 11M4.5 0L12 7.5M8 0L12 4" stroke="#2c2c2c" stroke-width="1.2"/><path d="M2.5 0L12 9.5M6 0L12 6M9.5 0L12 2.5" stroke="#a4a4a4" stroke-width="1.2"/></svg>
<div class="" style="left:1666px;top:54.6px;width:194px;height:18.6px;background:#858c92"></div>
<div class="" style="left:1666px;top:73.85px;width:253px;height:19.85px;background:#757575"></div>
<div class="" style="left:1666px;top:93.7px;width:253px;height:19.85px;background:#707070"></div>
<div class="" style="left:1666px;top:113.55px;width:253px;height:19.85px;background:#757575"></div>
<div class="" style="left:1666px;top:133.4px;width:253px;height:19.85px;background:#707070"></div>
<div class="" style="left:1666px;top:153.25px;width:253px;height:19.85px;background:#757575"></div>
<div class="" style="left:1666px;top:173.1px;width:253px;height:19.85px;background:#707070"></div>
<div class="" style="left:1860px;top:54px;width:1px;height:138px;background:#666"></div>
<div class="" style="left:1880px;top:54px;width:1px;height:138px;background:#666"></div>
<div class="" style="left:1900px;top:54px;width:1px;height:138px;background:#666"></div>
<div class="" style="left:1693px;top:73px;width:1px;height:71px;background:#333"></div>
<div class="" style="left:1679px;top:63.5px;width:9px;height:1px;background:#333"></div>
<div class="" style="left:1693px;top:123.5px;width:15px;height:1px;background:#333"></div>
<div class="" style="left:1693px;top:143.5px;width:15px;height:1px;background:#333"></div>
<svg style="left:1669.4px;top:58.9px" width="10" height="10" viewBox="0 0 10 10"><circle cx="5" cy="5" r="4.1" fill="#ececec" stroke="#1c1c1c" stroke-width=".9"/><path d="M2.4 5H7.6" stroke="#111" stroke-width="1"/></svg>
<div class="" style="left:1686.8px;top:54.9px;width:18px;height:18px;border-radius:50%;background:rgba(255,255,255,.45)"></div>
<svg style="left:1687.8px;top:55.9px" width="16" height="16" viewBox="0 0 16 16"><defs><radialGradient id="gs2" cx="0.4" cy="0.35" r="0.7"><stop offset="0" stop-color="#fff"/><stop offset="1" stop-color="#8c8c8c"/></radialGradient></defs><rect x="7.8" y="1.6" width="6" height="10.6" rx="2.4" fill="#3a70c4" stroke="#16284e" stroke-width="1"/><rect x="9.2" y="3" width="2" height="8" fill="#a4c4f0" opacity=".85"/><ellipse cx="10.8" cy="3" rx="2.2" ry="1" fill="#c4d8f4"/><circle cx="6" cy="11" r="3.7" fill="url(#gs2)" stroke="#161616" stroke-width="1.1"/><circle cx="3.4" cy="3.4" r="2.3" fill="#c8c038" opacity=".55"/><circle cx="3.4" cy="3.4" r="1.2" fill="#fffff0"/></svg><span class="t" style="left:1707.4px;top:60.3px;">Scene</span>
<svg style="left:1694.6px;top:78.8px" width="10" height="10" viewBox="0 0 10 10"><circle cx="5" cy="5" r="4.1" fill="#ececec" stroke="#1c1c1c" stroke-width=".9"/><path d="M2.4 5H7.6" stroke="#111" stroke-width="1"/><path d="M5 2.4V7.6" stroke="#111" stroke-width="1"/></svg>
<svg style="left:1707.6px;top:75.2px" width="17" height="17" viewBox="0 0 17 17"><rect x="4" y="4.4" width="11" height="10.6" fill="#d8d0b8" stroke="#2a2a2a" stroke-width=".9" transform="rotate(12 9 9)"/><rect x="1.2" y="1.2" width="11.4" height="11" fill="#eceef4" stroke="#2a2a2a" stroke-width=".9"/><rect x="6.4" y="3" width="3.2" height="6.4" rx="1.2" fill="#3c78d0" stroke="#1a2c58" stroke-width=".6"/><circle cx="5.4" cy="8.8" r="1.9" fill="#ddd" stroke="#222" stroke-width=".6"/><circle cx="3.4" cy="3.6" r="1" fill="#f0e040"/></svg><span class="t" style="left:1727.4px;top:80.4px;">RenderLayers</span>
<div class="" style="left:1805.5px;top:77px;width:1px;height:13px;background:#3c3c3c"></div>
<div class="" style="left:1815px;top:74.8px;width:18px;height:18px;border-radius:50%;background:rgba(255,255,255,.45)"></div>
<svg style="left:1815.6px;top:75.2px" width="17" height="17" viewBox="0 0 17 17"><rect x="4" y="4.4" width="11" height="10.6" fill="#d8d0b8" stroke="#2a2a2a" stroke-width=".9" transform="rotate(12 9 9)"/><rect x="1.2" y="1.2" width="11.4" height="11" fill="#eceef4" stroke="#2a2a2a" stroke-width=".9"/><rect x="6.4" y="3" width="3.2" height="6.4" rx="1.2" fill="#3c78d0" stroke="#1a2c58" stroke-width=".6"/><circle cx="5.4" cy="8.8" r="1.9" fill="#ddd" stroke="#222" stroke-width=".6"/><circle cx="3.4" cy="3.6" r="1" fill="#f0e040"/></svg><div class="" style="left:1706.8px;top:94.7px;width:18px;height:18px;border-radius:50%;background:rgba(200,200,230,.35)"></div>
<svg style="left:1707.8px;top:95.7px" width="16" height="16" viewBox="0 0 16 16"><circle cx="8" cy="8" r="6.4" fill="#5a98d8" stroke="#1c2c50" stroke-width="1"/><path d="M4 4.4C6 3 8 4 7.4 6C6.6 7.6 5 7.4 4.4 9C3 8 2.8 5.8 4 4.4Z M9 8.6C11 7.6 12.8 8.4 12.6 10C12 12 10 13 9.2 12C8.6 11 8.4 9.6 9 8.6Z M10 3C11.4 3 12.4 4.2 12.6 5.4C11.6 5.6 10.2 4.6 10 3Z" fill="#4c8a38"/></svg><span class="t" style="left:1727.4px;top:100.4px;">World</span>
<svg style="left:1689.2px;top:118.6px" width="10" height="10" viewBox="0 0 10 10"><circle cx="5" cy="5" r="4.1" fill="#ececec" stroke="#1c1c1c" stroke-width=".9"/><path d="M2.4 5H7.6" stroke="#111" stroke-width="1"/><path d="M5 2.4V7.6" stroke="#111" stroke-width="1"/></svg>
<svg style="left:1707.6px;top:115.6px" width="17" height="16" viewBox="0 0 17 16"><circle cx="5" cy="4.4" r="3" fill="#f09a38" stroke="#8a4a08" stroke-width=".9"/><circle cx="11" cy="4.4" r="3" fill="#f09a38" stroke="#8a4a08" stroke-width=".9"/><rect x="3" y="7.6" width="9.4" height="5.6" rx="1" fill="#f09a38" stroke="#8a4a08" stroke-width=".9"/><path d="M12.6 9.2L15.6 8V13L12.6 11.8Z" fill="#f09a38" stroke="#8a4a08" stroke-width=".8"/><circle cx="5" cy="4.4" r="1" fill="#8a4a08"/><circle cx="11" cy="4.4" r="1" fill="#8a4a08"/></svg><span class="t" style="left:1727.4px;top:120.2px;">Camera</span>
<div class="" style="left:1776.5px;top:117px;width:1px;height:13px;background:#3c3c3c"></div>
<div class="" style="left:1785.1px;top:114.1px;width:19px;height:19px;border-radius:50%;background:rgba(255,255,255,.3)"></div>
<svg style="left:1786.4px;top:115.6px" width="17" height="16" viewBox="0 0 17 16"><circle cx="5" cy="4.4" r="3" fill="#a8a8a8" stroke="#787878" stroke-width=".9"/><circle cx="11" cy="4.4" r="3" fill="#a8a8a8" stroke="#787878" stroke-width=".9"/><rect x="3" y="7.6" width="9.4" height="5.6" rx="1" fill="#a8a8a8" stroke="#787878" stroke-width=".9"/><path d="M12.6 9.2L15.6 8V13L12.6 11.8Z" fill="#a8a8a8" stroke="#787878" stroke-width=".8"/><circle cx="5" cy="4.4" r="1" fill="#787878"/><circle cx="11" cy="4.4" r="1" fill="#787878"/></svg><svg style="left:1689.2px;top:138.5px" width="10" height="10" viewBox="0 0 10 10"><circle cx="5" cy="5" r="4.1" fill="#ececec" stroke="#1c1c1c" stroke-width=".9"/><path d="M2.4 5H7.6" stroke="#111" stroke-width="1"/><path d="M5 2.4V7.6" stroke="#111" stroke-width="1"/></svg>
<div class="" style="left:1706.8px;top:134.5px;width:18px;height:18px;border-radius:50%;background:rgba(226,150,72,.82)"></div>
<svg style="left:1707.8px;top:135.5px" width="16" height="16" viewBox="0 0 16 16"><path d="M2.2 2.8H13.8L8 13.6Z" fill="none" stroke="#7a4a10" stroke-width="2.6" opacity=".55"/><path d="M2.2 2.8H13.8L8 13.6Z" fill="none" stroke="#ffb864" stroke-width="1.4"/><g fill="#fff" stroke="#7a4a10" stroke-width=".6"><circle cx="2.2" cy="2.8" r="1.5"/><circle cx="13.8" cy="2.8" r="1.5"/><circle cx="8" cy="13.6" r="1.5"/></g></svg><span class="t tw" style="left:1727.4px;top:140.1px;">Z</span>
<div class="" style="left:1745px;top:137px;width:1px;height:13px;background:#3c3c3c"></div>
<svg style="left:1755.2px;top:135.5px" width="16" height="16" viewBox="0 0 16 16"><path d="M2.2 2.8H13.8L8 13.6Z" fill="none" stroke="#333" stroke-width="2.6" opacity=".55"/><path d="M2.2 2.8H13.8L8 13.6Z" fill="none" stroke="#b0b0b0" stroke-width="1.4"/><g fill="#eee" stroke="#333" stroke-width=".6"><circle cx="2.2" cy="2.8" r="1.5"/><circle cx="13.8" cy="2.8" r="1.5"/><circle cx="8" cy="13.6" r="1.5"/></g></svg><svg style="left:1863.5px;top:118.6px" width="15" height="10" viewBox="0 0 15 10"><path d="M.8 5C3.4 1 11.6 1 14.2 5C11.6 9 3.4 9 .8 5Z" fill="#f4f4f4" stroke="#1c1c1c" stroke-width="1"/><circle cx="7.5" cy="4.8" r="2.6" fill="#2a2a2a"/><circle cx="6.8" cy="4" r=".8" fill="#ccc"/></svg><svg style="left:1887.4px;top:116.6px" width="10" height="15" viewBox="0 0 10 15"><path d="M1 1V11.4L3.6 9L5.6 13.6L7.4 12.8L5.4 8.4H9Z" fill="#f8f8f8" stroke="#111" stroke-width="1"/></svg><svg style="left:1903.4px;top:117.2px" width="15" height="13" viewBox="0 0 15 13"><rect x=".8" y="2.6" width="13" height="9.4" rx="1" fill="#e4e4e4" stroke="#1e1e1e" stroke-width="1"/><rect x="2.4" y=".8" width="4" height="2" fill="#ccc" stroke="#1e1e1e" stroke-width=".7"/><rect x="1.4" y="4.4" width="11.8" height="1.6" fill="#888"/><circle cx="8.4" cy="7.8" r="3" fill="#4a4a50" stroke="#1e1e1e" stroke-width=".8"/><circle cx="8.6" cy="8" r="1.4" fill="#c03030"/></svg><svg style="left:1863.5px;top:138.5px" width="15" height="10" viewBox="0 0 15 10"><path d="M.8 5C3.4 1 11.6 1 14.2 5C11.6 9 3.4 9 .8 5Z" fill="#f4f4f4" stroke="#1c1c1c" stroke-width="1"/><circle cx="7.5" cy="4.8" r="2.6" fill="#2a2a2a"/><circle cx="6.8" cy="4" r=".8" fill="#ccc"/></svg><svg style="left:1887.4px;top:136.5px" width="10" height="15" viewBox="0 0 10 15"><path d="M1 1V11.4L3.6 9L5.6 13.6L7.4 12.8L5.4 8.4H9Z" fill="#f8f8f8" stroke="#111" stroke-width="1"/></svg><svg style="left:1903.4px;top:137.1px" width="15" height="13" viewBox="0 0 15 13"><rect x=".8" y="2.6" width="13" height="9.4" rx="1" fill="#e4e4e4" stroke="#1e1e1e" stroke-width="1"/><rect x="2.4" y=".8" width="4" height="2" fill="#ccc" stroke="#1e1e1e" stroke-width=".7"/><rect x="1.4" y="4.4" width="11.8" height="1.6" fill="#888"/><circle cx="8.4" cy="7.8" r="3" fill="#4a4a50" stroke="#1e1e1e" stroke-width=".8"/><circle cx="8.6" cy="8" r="1.4" fill="#c03030"/></svg><div class="" style="left:1670.5px;top:194.3px;width:245px;height:12.3px;border-radius:6.2px;border:1px solid #4e4e4e;background:linear-gradient(#585858,#666)"></div>
<div class="" style="left:1670.5px;top:194.3px;width:206.5px;height:12.3px;border-radius:6.2px;border:1px solid #3e3e3e;background:linear-gradient(#8c8c8c,#787878)"></div>
<svg style="left:1666px;top:199px" width="12" height="12" viewBox="0 0 12 12"><path d="M0 1L11 12M0 4.5L7.5 12M0 8L4 12" stroke="#3c3c3c" stroke-width="1.2"/><path d="M0 2.5L9.5 12M0 6L6 12M0 9.5L2.5 12" stroke="#a4a4a4" stroke-width="1.2"/></svg>
<div class="" style="left:1666px;top:211px;width:253px;height:1px;background:#000"></div>
<div class="" style="left:1666px;top:212px;width:253px;height:26px;background:#6d6d6d"></div>
<div class="" style="left:1666px;top:212px;width:253px;height:1px;background:#858585"></div>
<div class="" style="left:1666px;top:237.5px;width:253px;height:1px;background:#5a5a5a"></div>
<div class="mnu" style="left:1675px;top:215px;width:30px;height:20px;"></div>
<svg style="left:1679px;top:217px" width="16" height="16" viewBox="0 0 16 16"><rect x="1.5" y="2.6" width="12.6" height="4" rx="1.6" fill="#9a9a9a" stroke="#eee" stroke-width=".9"/><rect x="8" y="3.2" width="5.4" height="2.8" rx="1.2" fill="#f4f4f4"/><rect x="1.5" y="9.4" width="12.6" height="4" rx="1.6" fill="#f4f4f4" stroke="#222" stroke-width=".6"/><path d="M3 11.4H12.6M3 11.4L4.4 10.2M3 11.4L4.4 12.6M12.6 11.4L11.2 10.2M12.6 11.4L11.2 12.6" stroke="#222" stroke-width=".9" fill="none"/></svg><svg style="left:1694.8px;top:218.2px" width="7" height="14" viewBox="0 0 7 14"><path d="M3.5 0.5L6.5 6H0.5Z M3.5 13.5L6.5 8H0.5Z" fill="#b4b4b4"/></svg><div class="mnu rl" style="left:1713.5px;top:215px;width:20px;height:20px;background:linear-gradient(#9ab0d4,#7c98c4);border-color:#3a68b8;box-shadow:inset 0 0 0 1px #5680c2"></div>
<svg style="left:1715.1px;top:217.5px" width="18" height="16" viewBox="0 0 18 16"><rect x="1" y="4.2" width="14.6" height="10.2" rx="1.2" fill="#e4e4e4" stroke="#1e1e1e" stroke-width="1"/><rect x="3" y="2.4" width="4.4" height="2.2" fill="#ccc" stroke="#1e1e1e" stroke-width=".8"/><rect x="1.6" y="6.4" width="13.4" height="2" fill="#888"/><circle cx="9.4" cy="9.8" r="3.5" fill="#4a4a50" stroke="#1e1e1e" stroke-width=".9"/><circle cx="9.6" cy="10" r="1.7" fill="#c03030"/><rect x="2.6" y="6.6" width="1.6" height="1.2" fill="#e02020"/></svg><div class="mnu rn" style="left:1732.5px;top:215px;width:20.9px;height:20px;"></div>
<svg style="left:1734.6px;top:217px" width="17" height="17" viewBox="0 0 17 17"><rect x="4" y="4.4" width="11" height="10.6" fill="#d8d0b8" stroke="#2a2a2a" stroke-width=".9" transform="rotate(12 9 9)"/><rect x="1.2" y="1.2" width="11.4" height="11" fill="#eceef4" stroke="#2a2a2a" stroke-width=".9"/><rect x="6.4" y="3" width="3.2" height="6.4" rx="1.2" fill="#3c78d0" stroke="#1a2c58" stroke-width=".6"/><circle cx="5.4" cy="8.8" r="1.9" fill="#ddd" stroke="#222" stroke-width=".6"/><circle cx="3.4" cy="3.6" r="1" fill="#f0e040"/></svg><div class="mnu rn" style="left:1752.4px;top:215px;width:20.9px;height:20px;"></div>
<svg style="left:1755px;top:217px" width="16" height="16" viewBox="0 0 16 16"><defs><radialGradient id="gs3" cx="0.4" cy="0.35" r="0.7"><stop offset="0" stop-color="#fff"/><stop offset="1" stop-color="#8c8c8c"/></radialGradient></defs><rect x="7.8" y="1.6" width="6" height="10.6" rx="2.4" fill="#3a70c4" stroke="#16284e" stroke-width="1"/><rect x="9.2" y="3" width="2" height="8" fill="#a4c4f0" opacity=".85"/><ellipse cx="10.8" cy="3" rx="2.2" ry="1" fill="#c4d8f4"/><circle cx="6" cy="11" r="3.7" fill="url(#gs3)" stroke="#161616" stroke-width="1.1"/><circle cx="3.4" cy="3.4" r="2.3" fill="#c8c038" opacity=".55"/><circle cx="3.4" cy="3.4" r="1.2" fill="#fffff0"/></svg><div class="mnu rn" style="left:1772.3px;top:215px;width:21px;height:20px;"></div>
<svg style="left:1774.9px;top:217px" width="16" height="16" viewBox="0 0 16 16"><circle cx="8" cy="8" r="6.4" fill="#5a98d8" stroke="#1c2c50" stroke-width="1"/><path d="M4 4.4C6 3 8 4 7.4 6C6.6 7.6 5 7.4 4.4 9C3 8 2.8 5.8 4 4.4Z M9 8.6C11 7.6 12.8 8.4 12.6 10C12 12 10 13 9.2 12C8.6 11 8.4 9.6 9 8.6Z M10 3C11.4 3 12.4 4.2 12.6 5.4C11.6 5.6 10.2 4.6 10 3Z" fill="#4c8a38"/></svg><div class="mnu rn" style="left:1792.3px;top:215px;width:20.9px;height:20px;"></div>
<svg style="left:1794.9px;top:217px" width="16" height="16" viewBox="0 0 16 16"><path d="M8 1.5L14 4V11L8 14.5L2 11V4Z" fill="#d8a058" stroke="#3a2a18" stroke-width=".9"/><path d="M2 4L8 6.6L14 4L8 1.5Z" fill="#f0d0a0"/><path d="M8 6.6V14.5L14 11V4Z" fill="#b87828"/></svg><div class="mnu rn" style="left:1812.2px;top:215px;width:21.1px;height:20px;"></div>
<svg style="left:1814.8px;top:217px" width="16" height="16" viewBox="0 0 16 16"><g fill="none" stroke="#2a2a2a" stroke-width="3.4"><rect x="1.8" y="6.6" width="7" height="4.4" rx="2.2" transform="rotate(-32 5 9)"/><rect x="7.2" y="4.6" width="7" height="4.4" rx="2.2" transform="rotate(-32 11 7)"/></g><g fill="none" stroke="#c8c8c8" stroke-width="1.6"><rect x="1.8" y="6.6" width="7" height="4.4" rx="2.2" transform="rotate(-32 5 9)"/><rect x="7.2" y="4.6" width="7" height="4.4" rx="2.2" transform="rotate(-32 11 7)"/></g></svg><div class="mnu rn" style="left:1832.3px;top:215px;width:21px;height:20px;"></div>
<svg style="left:1834.9px;top:217px" width="16" height="16" viewBox="0 0 16 16"><path d="M2.4 13.6L9 7" stroke="#1c3460" stroke-width="4"/><path d="M2.4 13.6L9 7" stroke="#6c98e0" stroke-width="2.2"/><path d="M13.6 4.4A3.6 3.6 0 1 1 11 1.6L9.6 4.6L11.4 6L13.6 4.4Z" fill="#6c98e0" stroke="#1c3460" stroke-width=".9"/></svg><div class="mnu rn" style="left:1852.3px;top:215px;width:21px;height:20px;"></div>
<svg style="left:1854.9px;top:217.5px" width="16" height="16" viewBox="0 0 16 16"><path d="M2.2 2.8H13.8L8 13.6Z" fill="none" stroke="#222" stroke-width="2.6" opacity=".55"/><path d="M2.2 2.8H13.8L8 13.6Z" fill="none" stroke="#d8d8d8" stroke-width="1.4"/><g fill="#fff" stroke="#222" stroke-width=".6"><circle cx="2.2" cy="2.8" r="1.5"/><circle cx="13.8" cy="2.8" r="1.5"/><circle cx="8" cy="13.6" r="1.5"/></g></svg><div class="mnu rn" style="left:1872.3px;top:215px;width:21px;height:20px;"></div>
<svg style="left:1874.9px;top:217px" width="16" height="16" viewBox="0 0 16 16"><defs><radialGradient id="gm" cx=".35" cy=".3" r=".8"><stop offset="0" stop-color="#e8e8e8"/><stop offset="1" stop-color="#5a5a5a"/></radialGradient></defs><circle cx="8" cy="8" r="6.2" fill="url(#gm)" stroke="#2a2a2a" stroke-width=".8"/><path d="M8 8L14.2 8A6.2 6.2 0 0 1 8 14.2Z" fill="#c08070" opacity=".75"/></svg><div class="mnu rn" style="left:1892.3px;top:215px;width:21px;height:20px;"></div>
<svg style="left:1894.9px;top:217px" width="16" height="16" viewBox="0 0 16 16"><rect x="1.5" y="1.5" width="13" height="13" fill="#f0e8e4" stroke="#3a2a2a" stroke-width=".6"/><rect x="1.5" y="1.5" width="3.25" height="3.25" fill="#a83028"/><rect x="1.5" y="8" width="3.25" height="3.25" fill="#a83028"/><rect x="4.75" y="4.75" width="3.25" height="3.25" fill="#a83028"/><rect x="4.75" y="11.25" width="3.25" height="3.25" fill="#a83028"/><rect x="8" y="1.5" width="3.25" height="3.25" fill="#a83028"/><rect x="8" y="8" width="3.25" height="3.25" fill="#a83028"/><rect x="11.25" y="4.75" width="3.25" height="3.25" fill="#a83028"/><rect x="11.25" y="11.25" width="3.25" height="3.25" fill="#a83028"/></svg><div class="mnu rn" style="left:1912.3px;top:215px;width:10px;height:20px;"></div>
<svg style="left:1914px;top:218px" width="5" height="14" viewBox="0 0 5 14"><path d="M5 2L2 7L5 12Z" fill="#e8c040"/></svg><svg style="left:1907px;top:212px" width="12" height="12" viewBox="0 0 12 12"><path d="M1 0L12 11M4.5 0L12 7.5M8 0L12 4" stroke="#2c2c2c" stroke-width="1.2"/><path d="M2.5 0L12 9.5M6 0L12 6M9.5 0L12 2.5" stroke="#a4a4a4" stroke-width="1.2"/></svg>
<svg style="left:1676px;top:248px" width="17" height="17" viewBox="0 0 17 17"><path d="M1.2 15.4L6.6 9.4" stroke="#222" stroke-width="2.4"/><path d="M1.2 15.4L6.6 9.4" stroke="#e8e8e8" stroke-width="1"/><path d="M4.4 6.6L10.2 12.4L11.4 10.4L10.4 8.8L13.6 5.8L15.4 6.2L10.8 1.4L11 3.2L8 6.4L6.4 5.4Z" fill="#e4e4e4" stroke="#222" stroke-width=".9"/></svg>
<svg style="left:1698.4px;top:248px" width="16" height="16" viewBox="0 0 16 16"><defs><radialGradient id="gs4" cx="0.4" cy="0.35" r="0.7"><stop offset="0" stop-color="#fff"/><stop offset="1" stop-color="#8c8c8c"/></radialGradient></defs><rect x="7.8" y="1.6" width="6" height="10.6" rx="2.4" fill="#3a70c4" stroke="#16284e" stroke-width="1"/><rect x="9.2" y="3" width="2" height="8" fill="#a4c4f0" opacity=".85"/><ellipse cx="10.8" cy="3" rx="2.2" ry="1" fill="#c4d8f4"/><circle cx="6" cy="11" r="3.7" fill="url(#gs4)" stroke="#161616" stroke-width="1.1"/><circle cx="3.4" cy="3.4" r="2.3" fill="#c8c038" opacity=".55"/><circle cx="3.4" cy="3.4" r="1.2" fill="#fffff0"/></svg><span class="t" style="left:1717.8px;top:252px;">Scene</span>
<div class="" style="left:1671px;top:273.3px;width:244px;height:1px;background:#5a5a5a"></div>
<div class="" style="left:1671px;top:274.3px;width:244px;height:1px;background:#7a7a7a"></div>
<svg style="left:1678.8px;top:281.6px" width="9" height="9" viewBox="0 0 9 9"><path d="M0.3 0.5H8.7L4.5 8.5Z" fill="#1a1a1a"/></svg>
<span class="pt" style="left:1691.6px;top:280px;">Render</span>
<svg style="left:1898.5px;top:285px" width="12" height="6" viewBox="0 0 12 6"><rect x="0" y="0" width="1" height="1" fill="#4a4a4a"/><rect x="1" y="1" width="1" height="1" fill="#a0a0a0"/><rect x="0" y="3" width="1" height="1" fill="#4a4a4a"/><rect x="1" y="4" width="1" height="1" fill="#a0a0a0"/><rect x="3" y="0" width="1" height="1" fill="#4a4a4a"/><rect x="4" y="1" width="1" height="1" fill="#a0a0a0"/><rect x="3" y="3" width="1" height="1" fill="#4a4a4a"/><rect x="4" y="4" width="1" height="1" fill="#a0a0a0"/><rect x="6" y="0" width="1" height="1" fill="#4a4a4a"/><rect x="7" y="1" width="1" height="1" fill="#a0a0a0"/><rect x="6" y="3" width="1" height="1" fill="#4a4a4a"/><rect x="7" y="4" width="1" height="1" fill="#a0a0a0"/><rect x="9" y="0" width="1" height="1" fill="#4a4a4a"/><rect x="10" y="1" width="1" height="1" fill="#a0a0a0"/><rect x="9" y="3" width="1" height="1" fill="#4a4a4a"/><rect x="10" y="4" width="1" height="1" fill="#a0a0a0"/></svg>
<div class="btn rl" style="left:1674px;top:306px;width:79px;height:20px;"></div>
<div class="btn rn" style="left:1752px;top:306px;width:80px;height:20px;"></div>
<div class="btn rr" style="left:1831px;top:306px;width:81px;height:20px;"></div>
<svg style="left:1677px;top:307.6px" width="18" height="16" viewBox="0 0 18 16"><rect x="1" y="4.2" width="14.6" height="10.2" rx="1.2" fill="#e4e4e4" stroke="#1e1e1e" stroke-width="1"/><rect x="3" y="2.4" width="4.4" height="2.2" fill="#ccc" stroke="#1e1e1e" stroke-width=".8"/><rect x="1.6" y="6.4" width="13.4" height="2" fill="#888"/><circle cx="9.4" cy="9.8" r="3.5" fill="#4a4a50" stroke="#1e1e1e" stroke-width=".9"/><circle cx="9.6" cy="10" r="1.7" fill="#c03030"/><rect x="2.6" y="6.6" width="1.6" height="1.2" fill="#e02020"/><path d="M14 0.4L15 2.6L17.4 3L15.4 4.2L16 6.6L14 5.2L12 6.6L12.6 4.2L10.6 3L13 2.6Z" fill="#ffe860" stroke="#a08a10" stroke-width=".4"/></svg><span class="t" style="left:1703.4px;top:312px;">Render</span>
<svg style="left:1755px;top:307.6px" width="18" height="16" viewBox="0 0 18 16"><rect x="2" y="7" width="13.4" height="7.6" fill="#dcdcdc" stroke="#1e1e1e" stroke-width="1"/><path d="M3.6 9.4H13.8M3.6 11.4H13.8M3.6 13.2H9" stroke="#555" stroke-width=".9"/><path d="M1.2 5.6L14.6 1.2L15.4 3.6L2 8Z" fill="#f4f4f4" stroke="#1e1e1e" stroke-width=".9"/><path d="M4 4.7L5.4 7M7.4 3.6L8.8 5.9M10.8 2.5L12.2 4.8" stroke="#1e1e1e" stroke-width="1.5"/></svg><span class="t" style="left:1774.2px;top:312px;">Animation</span>
<svg style="left:1834.5px;top:308.4px" width="18" height="16" viewBox="0 0 18 16"><path d="M1.4 5.4H4L7.4 2.4V13.6L4 10.6H1.4Z" fill="#eee" stroke="#222" stroke-width=".9"/><path d="M9.6 5.4C10.8 6.8 10.8 9.2 9.6 10.6M11.8 3.6C14 6 14 10 11.8 12.4M14 2C17 5.2 17 10.8 14 14" stroke="#88a8e0" stroke-width="1.2" fill="none"/></svg>
<span class="t" style="left:1865.2px;top:312px;">Audio</span>
<span class="t" style="left:1681px;top:337px;">Display:</span>
<div class="mnu rl" style="left:1757px;top:331px;width:135px;height:20px;"></div>
<div class="btn rr" style="left:1891px;top:331px;width:21px;height:20px;"></div>
<span class="t tw" style="left:1764.2px;top:337px;">Image Editor</span>
<svg style="left:1882.2px;top:334.6px" width="7" height="14" viewBox="0 0 7 14"><path d="M3.5 0.5L6.5 6H0.5Z M3.5 13.5L6.5 8H0.5Z" fill="#b4b4b4"/></svg><svg style="left:1893.5px;top:333.4px" width="16" height="16" viewBox="0 0 16 16"><path d="M2.4 8V4.6A2.6 2.6 0 0 1 7.6 4.6" fill="none" stroke="#222" stroke-width="2.6"/><path d="M2.4 8V4.6A2.6 2.6 0 0 1 7.6 4.6" fill="none" stroke="#e8e8e8" stroke-width="1.1"/><rect x="4.6" y="7.4" width="9.6" height="6.6" fill="#e8e8e8" stroke="#222" stroke-width=".9"/><rect x="8.6" y="9.6" width="1.8" height="2.6" fill="#444"/></svg>
<span class="t" style="left:1681px;top:362.3px;letter-spacing:-0.1px">Feature Set:</span>
<div class="mnu" style="left:1757px;top:356px;width:155px;height:20px;"></div>
<span class="t tw" style="left:1764.2px;top:362.3px;letter-spacing:-0.2px">Supported</span>
<svg style="left:1902.2px;top:359.3px" width="7" height="14" viewBox="0 0 7 14"><path d="M3.5 0.5L6.5 6H0.5Z M3.5 13.5L6.5 8H0.5Z" fill="#b4b4b4"/></svg><span class="t" style="left:1681px;top:387.1px;">Device:</span>
<div class="mnu" style="left:1757px;top:381px;width:155px;height:20px;background:linear-gradient(#676767,#5a5a5a);border-color:#484848"></div>
<span class="t" style="left:1764.4px;top:387.1px;color:#a4a4a4">CPU</span>
<svg style="left:1902.2px;top:384.1px" width="7" height="14" viewBox="0 0 7 14"><path d="M3.5 0.5L6.5 6H0.5Z M3.5 13.5L6.5 8H0.5Z" fill="#8a8a8a"/></svg><div class="chk" style="left:1677.4px;top:409.2px;width:13.4px;height:13.4px;"></div>
<span class="t" style="left:1698.3px;top:412.3px;letter-spacing:-0.24px">Open Shading Language</span>
<div class="" style="left:1671px;top:433.3px;width:244px;height:1px;background:#5a5a5a"></div>
<div class="" style="left:1671px;top:434.3px;width:244px;height:1px;background:#7a7a7a"></div>
<svg style="left:1678.6px;top:440.9px" width="9" height="9" viewBox="0 0 9 9"><path d="M0.5 0.3V8.7L8.5 4.5Z" fill="#1a1a1a"/></svg>
<span class="pt" style="left:1691.2px;top:439.3px;">Dimensions</span>
<svg style="left:1898.5px;top:445.3px" width="12" height="6" viewBox="0 0 12 6"><rect x="0" y="0" width="1" height="1" fill="#4a4a4a"/><rect x="1" y="1" width="1" height="1" fill="#a0a0a0"/><rect x="0" y="3" width="1" height="1" fill="#4a4a4a"/><rect x="1" y="4" width="1" height="1" fill="#a0a0a0"/><rect x="3" y="0" width="1" height="1" fill="#4a4a4a"/><rect x="4" y="1" width="1" height="1" fill="#a0a0a0"/><rect x="3" y="3" width="1" height="1" fill="#4a4a4a"/><rect x="4" y="4" width="1" height="1" fill="#a0a0a0"/><rect x="6" y="0" width="1" height="1" fill="#4a4a4a"/><rect x="7" y="1" width="1" height="1" fill="#a0a0a0"/><rect x="6" y="3" width="1" height="1" fill="#4a4a4a"/><rect x="7" y="4" width="1" height="1" fill="#a0a0a0"/><rect x="9" y="0" width="1" height="1" fill="#4a4a4a"/><rect x="10" y="1" width="1" height="1" fill="#a0a0a0"/><rect x="9" y="3" width="1" height="1" fill="#4a4a4a"/><rect x="10" y="4" width="1" height="1" fill="#a0a0a0"/></svg>
<div class="" style="left:1671px;top:457.31px;width:244px;height:1px;background:#5a5a5a"></div>
<div class="" style="left:1671px;top:458.31px;width:244px;height:1px;background:#7a7a7a"></div>
<svg style="left:1678.6px;top:464.91px" width="9" height="9" viewBox="0 0 9 9"><path d="M0.5 0.3V8.7L8.5 4.5Z" fill="#1a1a1a"/></svg>
<span class="pt" style="left:1691.2px;top:463.31px;">Metadata</span>
<svg style="left:1898.5px;top:469.31px" width="12" height="6" viewBox="0 0 12 6"><rect x="0" y="0" width="1" height="1" fill="#4a4a4a"/><rect x="1" y="1" width="1" height="1" fill="#a0a0a0"/><rect x="0" y="3" width="1" height="1" fill="#4a4a4a"/><rect x="1" y="4" width="1" height="1" fill="#a0a0a0"/><rect x="3" y="0" width="1" height="1" fill="#4a4a4a"/><rect x="4" y="1" width="1" height="1" fill="#a0a0a0"/><rect x="3" y="3" width="1" height="1" fill="#4a4a4a"/><rect x="4" y="4" width="1" height="1" fill="#a0a0a0"/><rect x="6" y="0" width="1" height="1" fill="#4a4a4a"/><rect x="7" y="1" width="1" height="1" fill="#a0a0a0"/><rect x="6" y="3" width="1" height="1" fill="#4a4a4a"/><rect x="7" y="4" width="1" height="1" fill="#a0a0a0"/><rect x="9" y="0" width="1" height="1" fill="#4a4a4a"/><rect x="10" y="1" width="1" height="1" fill="#a0a0a0"/><rect x="9" y="3" width="1" height="1" fill="#4a4a4a"/><rect x="10" y="4" width="1" height="1" fill="#a0a0a0"/></svg>
<div class="" style="left:1671px;top:481.32px;width:244px;height:1px;background:#5a5a5a"></div>
<div class="" style="left:1671px;top:482.32px;width:244px;height:1px;background:#7a7a7a"></div>
<svg style="left:1678.6px;top:488.92px" width="9" height="9" viewBox="0 0 9 9"><path d="M0.5 0.3V8.7L8.5 4.5Z" fill="#1a1a1a"/></svg>
<span class="pt" style="left:1691.2px;top:487.32px;">Output</span>
<svg style="left:1898.5px;top:493.32px" width="12" height="6" viewBox="0 0 12 6"><rect x="0" y="0" width="1" height="1" fill="#4a4a4a"/><rect x="1" y="1" width="1" height="1" fill="#a0a0a0"/><rect x="0" y="3" width="1" height="1" fill="#4a4a4a"/><rect x="1" y="4" width="1" height="1" fill="#a0a0a0"/><rect x="3" y="0" width="1" height="1" fill="#4a4a4a"/><rect x="4" y="1" width="1" height="1" fill="#a0a0a0"/><rect x="3" y="3" width="1" height="1" fill="#4a4a4a"/><rect x="4" y="4" width="1" height="1" fill="#a0a0a0"/><rect x="6" y="0" width="1" height="1" fill="#4a4a4a"/><rect x="7" y="1" width="1" height="1" fill="#a0a0a0"/><rect x="6" y="3" width="1" height="1" fill="#4a4a4a"/><rect x="7" y="4" width="1" height="1" fill="#a0a0a0"/><rect x="9" y="0" width="1" height="1" fill="#4a4a4a"/><rect x="10" y="1" width="1" height="1" fill="#a0a0a0"/><rect x="9" y="3" width="1" height="1" fill="#4a4a4a"/><rect x="10" y="4" width="1" height="1" fill="#a0a0a0"/></svg>
<div class="" style="left:1671px;top:505.33px;width:244px;height:1px;background:#5a5a5a"></div>
<div class="" style="left:1671px;top:506.33px;width:244px;height:1px;background:#7a7a7a"></div>
<svg style="left:1678.6px;top:512.93px" width="9" height="9" viewBox="0 0 9 9"><path d="M0.5 0.3V8.7L8.5 4.5Z" fill="#1a1a1a"/></svg>
<div class="chk" style="left:1691.2px;top:511.43px;width:13.2px;height:13.2px;"></div>
<span class="pt" style="left:1711.4px;top:511.33px;">Freestyle</span>
<svg style="left:1898.5px;top:517.33px" width="12" height="6" viewBox="0 0 12 6"><rect x="0" y="0" width="1" height="1" fill="#4a4a4a"/><rect x="1" y="1" width="1" height="1" fill="#a0a0a0"/><rect x="0" y="3" width="1" height="1" fill="#4a4a4a"/><rect x="1" y="4" width="1" height="1" fill="#a0a0a0"/><rect x="3" y="0" width="1" height="1" fill="#4a4a4a"/><rect x="4" y="1" width="1" height="1" fill="#a0a0a0"/><rect x="3" y="3" width="1" height="1" fill="#4a4a4a"/><rect x="4" y="4" width="1" height="1" fill="#a0a0a0"/><rect x="6" y="0" width="1" height="1" fill="#4a4a4a"/><rect x="7" y="1" width="1" height="1" fill="#a0a0a0"/><rect x="6" y="3" width="1" height="1" fill="#4a4a4a"/><rect x="7" y="4" width="1" height="1" fill="#a0a0a0"/><rect x="9" y="0" width="1" height="1" fill="#4a4a4a"/><rect x="10" y="1" width="1" height="1" fill="#a0a0a0"/><rect x="9" y="3" width="1" height="1" fill="#4a4a4a"/><rect x="10" y="4" width="1" height="1" fill="#a0a0a0"/></svg>
<div class="" style="left:1671px;top:529.34px;width:244px;height:1px;background:#5a5a5a"></div>
<div class="" style="left:1671px;top:530.34px;width:244px;height:1px;background:#7a7a7a"></div>
<svg style="left:1678.6px;top:536.94px" width="9" height="9" viewBox="0 0 9 9"><path d="M0.5 0.3V8.7L8.5 4.5Z" fill="#1a1a1a"/></svg>
<span class="pt" style="left:1691.2px;top:535.34px;">Sampling</span>
<svg style="left:1898.5px;top:541.34px" width="12" height="6" viewBox="0 0 12 6"><rect x="0" y="0" width="1" height="1" fill="#4a4a4a"/><rect x="1" y="1" width="1" height="1" fill="#a0a0a0"/><rect x="0" y="3" width="1" height="1" fill="#4a4a4a"/><rect x="1" y="4" width="1" height="1" fill="#a0a0a0"/><rect x="3" y="0" width="1" height="1" fill="#4a4a4a"/><rect x="4" y="1" width="1" height="1" fill="#a0a0a0"/><rect x="3" y="3" width="1" height="1" fill="#4a4a4a"/><rect x="4" y="4" width="1" height="1" fill="#a0a0a0"/><rect x="6" y="0" width="1" height="1" fill="#4a4a4a"/><rect x="7" y="1" width="1" height="1" fill="#a0a0a0"/><rect x="6" y="3" width="1" height="1" fill="#4a4a4a"/><rect x="7" y="4" width="1" height="1" fill="#a0a0a0"/><rect x="9" y="0" width="1" height="1" fill="#4a4a4a"/><rect x="10" y="1" width="1" height="1" fill="#a0a0a0"/><rect x="9" y="3" width="1" height="1" fill="#4a4a4a"/><rect x="10" y="4" width="1" height="1" fill="#a0a0a0"/></svg>
<div class="" style="left:1671px;top:553.35px;width:244px;height:1px;background:#5a5a5a"></div>
<div class="" style="left:1671px;top:554.35px;width:244px;height:1px;background:#7a7a7a"></div>
<svg style="left:1678.6px;top:560.95px" width="9" height="9" viewBox="0 0 9 9"><path d="M0.5 0.3V8.7L8.5 4.5Z" fill="#1a1a1a"/></svg>
<span class="pt" style="left:1691.2px;top:559.35px;">Geometry</span>
<svg style="left:1898.5px;top:565.35px" width="12" height="6" viewBox="0 0 12 6"><rect x="0" y="0" width="1" height="1" fill="#4a4a4a"/><rect x="1" y="1" width="1" height="1" fill="#a0a0a0"/><rect x="0" y="3" width="1" height="1" fill="#4a4a4a"/><rect x="1" y="4" width="1" height="1" fill="#a0a0a0"/><rect x="3" y="0" width="1" height="1" fill="#4a4a4a"/><rect x="4" y="1" width="1" height="1" fill="#a0a0a0"/><rect x="3" y="3" width="1" height="1" fill="#4a4a4a"/><rect x="4" y="4" width="1" height="1" fill="#a0a0a0"/><rect x="6" y="0" width="1" height="1" fill="#4a4a4a"/><rect x="7" y="1" width="1" height="1" fill="#a0a0a0"/><rect x="6" y="3" width="1" height="1" fill="#4a4a4a"/><rect x="7" y="4" width="1" height="1" fill="#a0a0a0"/><rect x="9" y="0" width="1" height="1" fill="#4a4a4a"/><rect x="10" y="1" width="1" height="1" fill="#a0a0a0"/><rect x="9" y="3" width="1" height="1" fill="#4a4a4a"/><rect x="10" y="4" width="1" height="1" fill="#a0a0a0"/></svg>
<div class="" style="left:1671px;top:577.36px;width:244px;height:1px;background:#5a5a5a"></div>
<div class="" style="left:1671px;top:578.36px;width:244px;height:1px;background:#7a7a7a"></div>
<svg style="left:1678.6px;top:584.96px" width="9" height="9" viewBox="0 0 9 9"><path d="M0.5 0.3V8.7L8.5 4.5Z" fill="#1a1a1a"/></svg>
<span class="pt" style="left:1691.2px;top:583.36px;">Light Paths</span>
<svg style="left:1898.5px;top:589.36px" width="12" height="6" viewBox="0 0 12 6"><rect x="0" y="0" width="1" height="1" fill="#4a4a4a"/><rect x="1" y="1" width="1" height="1" fill="#a0a0a0"/><rect x="0" y="3" width="1" height="1" fill="#4a4a4a"/><rect x="1" y="4" width="1" height="1" fill="#a0a0a0"/><rect x="3" y="0" width="1" height="1" fill="#4a4a4a"/><rect x="4" y="1" width="1" height="1" fill="#a0a0a0"/><rect x="3" y="3" width="1" height="1" fill="#4a4a4a"/><rect x="4" y="4" width="1" height="1" fill="#a0a0a0"/><rect x="6" y="0" width="1" height="1" fill="#4a4a4a"/><rect x="7" y="1" width="1" height="1" fill="#a0a0a0"/><rect x="6" y="3" width="1" height="1" fill="#4a4a4a"/><rect x="7" y="4" width="1" height="1" fill="#a0a0a0"/><rect x="9" y="0" width="1" height="1" fill="#4a4a4a"/><rect x="10" y="1" width="1" height="1" fill="#a0a0a0"/><rect x="9" y="3" width="1" height="1" fill="#4a4a4a"/><rect x="10" y="4" width="1" height="1" fill="#a0a0a0"/></svg>
<div class="" style="left:1671px;top:601.37px;width:244px;height:1px;background:#5a5a5a"></div>
<div class="" style="left:1671px;top:602.37px;width:244px;height:1px;background:#7a7a7a"></div>
<svg style="left:1678.6px;top:608.97px" width="9" height="9" viewBox="0 0 9 9"><path d="M0.5 0.3V8.7L8.5 4.5Z" fill="#1a1a1a"/></svg>
<div class="chk" style="left:1691.2px;top:607.47px;width:13.2px;height:13.2px;"></div>
<span class="pt" style="left:1711.4px;top:607.37px;">Motion Blur</span>
<svg style="left:1898.5px;top:613.37px" width="12" height="6" viewBox="0 0 12 6"><rect x="0" y="0" width="1" height="1" fill="#4a4a4a"/><rect x="1" y="1" width="1" height="1" fill="#a0a0a0"/><rect x="0" y="3" width="1" height="1" fill="#4a4a4a"/><rect x="1" y="4" width="1" height="1" fill="#a0a0a0"/><rect x="3" y="0" width="1" height="1" fill="#4a4a4a"/><rect x="4" y="1" width="1" height="1" fill="#a0a0a0"/><rect x="3" y="3" width="1" height="1" fill="#4a4a4a"/><rect x="4" y="4" width="1" height="1" fill="#a0a0a0"/><rect x="6" y="0" width="1" height="1" fill="#4a4a4a"/><rect x="7" y="1" width="1" height="1" fill="#a0a0a0"/><rect x="6" y="3" width="1" height="1" fill="#4a4a4a"/><rect x="7" y="4" width="1" height="1" fill="#a0a0a0"/><rect x="9" y="0" width="1" height="1" fill="#4a4a4a"/><rect x="10" y="1" width="1" height="1" fill="#a0a0a0"/><rect x="9" y="3" width="1" height="1" fill="#4a4a4a"/><rect x="10" y="4" width="1" height="1" fill="#a0a0a0"/></svg>
<div class="" style="left:1671px;top:625.38px;width:244px;height:1px;background:#5a5a5a"></div>
<div class="" style="left:1671px;top:626.38px;width:244px;height:1px;background:#7a7a7a"></div>
<svg style="left:1678.6px;top:632.98px" width="9" height="9" viewBox="0 0 9 9"><path d="M0.5 0.3V8.7L8.5 4.5Z" fill="#1a1a1a"/></svg>
<span class="pt" style="left:1691.2px;top:631.38px;">Film</span>
<svg style="left:1898.5px;top:637.38px" width="12" height="6" viewBox="0 0 12 6"><rect x="0" y="0" width="1" height="1" fill="#4a4a4a"/><rect x="1" y="1" width="1" height="1" fill="#a0a0a0"/><rect x="0" y="3" width="1" height="1" fill="#4a4a4a"/><rect x="1" y="4" width="1" height="1" fill="#a0a0a0"/><rect x="3" y="0" width="1" height="1" fill="#4a4a4a"/><rect x="4" y="1" width="1" height="1" fill="#a0a0a0"/><rect x="3" y="3" width="1" height="1" fill="#4a4a4a"/><rect x="4" y="4" width="1" height="1" fill="#a0a0a0"/><rect x="6" y="0" width="1" height="1" fill="#4a4a4a"/><rect x="7" y="1" width="1" height="1" fill="#a0a0a0"/><rect x="6" y="3" width="1" height="1" fill="#4a4a4a"/><rect x="7" y="4" width="1" height="1" fill="#a0a0a0"/><rect x="9" y="0" width="1" height="1" fill="#4a4a4a"/><rect x="10" y="1" width="1" height="1" fill="#a0a0a0"/><rect x="9" y="3" width="1" height="1" fill="#4a4a4a"/><rect x="10" y="4" width="1" height="1" fill="#a0a0a0"/></svg>
<div class="" style="left:1671px;top:649.39px;width:244px;height:1px;background:#5a5a5a"></div>
<div class="" style="left:1671px;top:650.39px;width:244px;height:1px;background:#7a7a7a"></div>
<svg style="left:1678.6px;top:656.99px" width="9" height="9" viewBox="0 0 9 9"><path d="M0.5 0.3V8.7L8.5 4.5Z" fill="#1a1a1a"/></svg>
<span class="pt" style="left:1691.2px;top:655.39px;">Performance</span>
<svg style="left:1898.5px;top:661.39px" width="12" height="6" viewBox="0 0 12 6"><rect x="0" y="0" width="1" height="1" fill="#4a4a4a"/><rect x="1" y="1" width="1" height="1" fill="#a0a0a0"/><rect x="0" y="3" width="1" height="1" fill="#4a4a4a"/><rect x="1" y="4" width="1" height="1" fill="#a0a0a0"/><rect x="3" y="0" width="1" height="1" fill="#4a4a4a"/><rect x="4" y="1" width="1" height="1" fill="#a0a0a0"/><rect x="3" y="3" width="1" height="1" fill="#4a4a4a"/><rect x="4" y="4" width="1" height="1" fill="#a0a0a0"/><rect x="6" y="0" width="1" height="1" fill="#4a4a4a"/><rect x="7" y="1" width="1" height="1" fill="#a0a0a0"/><rect x="6" y="3" width="1" height="1" fill="#4a4a4a"/><rect x="7" y="4" width="1" height="1" fill="#a0a0a0"/><rect x="9" y="0" width="1" height="1" fill="#4a4a4a"/><rect x="10" y="1" width="1" height="1" fill="#a0a0a0"/><rect x="9" y="3" width="1" height="1" fill="#4a4a4a"/><rect x="10" y="4" width="1" height="1" fill="#a0a0a0"/></svg>
<div class="" style="left:1671px;top:673.4px;width:244px;height:1px;background:#5a5a5a"></div>
<div class="" style="left:1671px;top:674.4px;width:244px;height:1px;background:#7a7a7a"></div>
<svg style="left:1678.6px;top:681px" width="9" height="9" viewBox="0 0 9 9"><path d="M0.5 0.3V8.7L8.5 4.5Z" fill="#1a1a1a"/></svg>
<span class="pt" style="left:1691.2px;top:679.4px;">Post Processing</span>
<svg style="left:1898.5px;top:685.4px" width="12" height="6" viewBox="0 0 12 6"><rect x="0" y="0" width="1" height="1" fill="#4a4a4a"/><rect x="1" y="1" width="1" height="1" fill="#a0a0a0"/><rect x="0" y="3" width="1" height="1" fill="#4a4a4a"/><rect x="1" y="4" width="1" height="1" fill="#a0a0a0"/><rect x="3" y="0" width="1" height="1" fill="#4a4a4a"/><rect x="4" y="1" width="1" height="1" fill="#a0a0a0"/><rect x="3" y="3" width="1" height="1" fill="#4a4a4a"/><rect x="4" y="4" width="1" height="1" fill="#a0a0a0"/><rect x="6" y="0" width="1" height="1" fill="#4a4a4a"/><rect x="7" y="1" width="1" height="1" fill="#a0a0a0"/><rect x="6" y="3" width="1" height="1" fill="#4a4a4a"/><rect x="7" y="4" width="1" height="1" fill="#a0a0a0"/><rect x="9" y="0" width="1" height="1" fill="#4a4a4a"/><rect x="10" y="1" width="1" height="1" fill="#a0a0a0"/><rect x="9" y="3" width="1" height="1" fill="#4a4a4a"/><rect x="10" y="4" width="1" height="1" fill="#a0a0a0"/></svg>
<div class="" style="left:1671px;top:697.41px;width:244px;height:1px;background:#5a5a5a"></div>
<div class="" style="left:1671px;top:698.41px;width:244px;height:1px;background:#7a7a7a"></div>
<svg style="left:1678.6px;top:705.01px" width="9" height="9" viewBox="0 0 9 9"><path d="M0.5 0.3V8.7L8.5 4.5Z" fill="#1a1a1a"/></svg>
<span class="pt" style="left:1691.2px;top:703.41px;">Bake</span>
<svg style="left:1898.5px;top:709.41px" width="12" height="6" viewBox="0 0 12 6"><rect x="0" y="0" width="1" height="1" fill="#4a4a4a"/><rect x="1" y="1" width="1" height="1" fill="#a0a0a0"/><rect x="0" y="3" width="1" height="1" fill="#4a4a4a"/><rect x="1" y="4" width="1" height="1" fill="#a0a0a0"/><rect x="3" y="0" width="1" height="1" fill="#4a4a4a"/><rect x="4" y="1" width="1" height="1" fill="#a0a0a0"/><rect x="3" y="3" width="1" height="1" fill="#4a4a4a"/><rect x="4" y="4" width="1" height="1" fill="#a0a0a0"/><rect x="6" y="0" width="1" height="1" fill="#4a4a4a"/><rect x="7" y="1" width="1" height="1" fill="#a0a0a0"/><rect x="6" y="3" width="1" height="1" fill="#4a4a4a"/><rect x="7" y="4" width="1" height="1" fill="#a0a0a0"/><rect x="9" y="0" width="1" height="1" fill="#4a4a4a"/><rect x="10" y="1" width="1" height="1" fill="#a0a0a0"/><rect x="9" y="3" width="1" height="1" fill="#4a4a4a"/><rect x="10" y="4" width="1" height="1" fill="#a0a0a0"/></svg>
<svg style="left:1666px;top:1067px" width="12" height="12" viewBox="0 0 12 12"><path d="M0 1L11 12M0 4.5L7.5 12M0 8L4 12" stroke="#3c3c3c" stroke-width="1.2"/><path d="M0 2.5L9.5 12M0 6L6 12M0 9.5L2.5 12" stroke="#a4a4a4" stroke-width="1.2"/></svg>
</div></body></html>
